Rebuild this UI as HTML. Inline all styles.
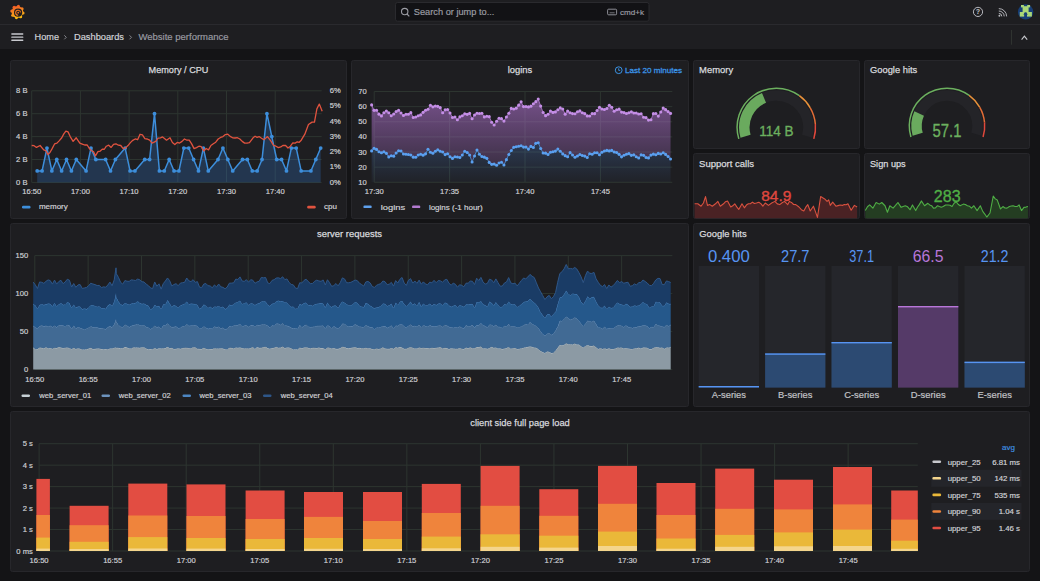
<!DOCTYPE html>
<html><head><meta charset="utf-8"><style>
html,body{margin:0;padding:0;background:#141416;width:1040px;height:581px;overflow:hidden}
svg{display:block;font-family:"Liberation Sans", sans-serif}
</style></head><body>
<svg width="1040" height="581" viewBox="0 0 1040 581">
<rect x="0" y="0" width="1040" height="49" fill="#1e1e21"/>
<rect x="0" y="24" width="1040" height="1" fill="#2a2a2e"/>
<rect x="10.5" y="60.5" width="336" height="158" rx="2" fill="#1e1e21" stroke="#27272b" stroke-width="1"/>
<rect x="351.5" y="60.5" width="337" height="158" rx="2" fill="#1e1e21" stroke="#27272b" stroke-width="1"/>
<rect x="693.5" y="60.5" width="166" height="88" rx="2" fill="#1e1e21" stroke="#27272b" stroke-width="1"/>
<rect x="864.5" y="60.5" width="165" height="88" rx="2" fill="#1e1e21" stroke="#27272b" stroke-width="1"/>
<rect x="693.5" y="153.5" width="166" height="65" rx="2" fill="#1e1e21" stroke="#27272b" stroke-width="1"/>
<rect x="864.5" y="153.5" width="165" height="65" rx="2" fill="#1e1e21" stroke="#27272b" stroke-width="1"/>
<rect x="10.5" y="223.5" width="678" height="183" rx="2" fill="#1e1e21" stroke="#27272b" stroke-width="1"/>
<rect x="693.5" y="223.5" width="336" height="183" rx="2" fill="#1e1e21" stroke="#27272b" stroke-width="1"/>
<rect x="10.5" y="411.5" width="1019" height="160" rx="2" fill="#1e1e21" stroke="#27272b" stroke-width="1"/>
<line x1="31.7" y1="90.8" x2="321.7" y2="90.8" stroke="#2d3530" stroke-width="1"/>
<text x="27.5" y="92.9" font-size="7.6" fill="#d0d1d5" text-anchor="end" font-weight="400" stroke="#d0d1d5" stroke-width="0.18">8 B</text>
<line x1="31.7" y1="113.7" x2="321.7" y2="113.7" stroke="#2d3530" stroke-width="1"/>
<text x="27.5" y="115.8" font-size="7.6" fill="#d0d1d5" text-anchor="end" font-weight="400" stroke="#d0d1d5" stroke-width="0.18">6 B</text>
<line x1="31.7" y1="136.6" x2="321.7" y2="136.6" stroke="#2d3530" stroke-width="1"/>
<text x="27.5" y="138.7" font-size="7.6" fill="#d0d1d5" text-anchor="end" font-weight="400" stroke="#d0d1d5" stroke-width="0.18">4 B</text>
<line x1="31.7" y1="159.5" x2="321.7" y2="159.5" stroke="#2d3530" stroke-width="1"/>
<text x="27.5" y="161.6" font-size="7.6" fill="#d0d1d5" text-anchor="end" font-weight="400" stroke="#d0d1d5" stroke-width="0.18">2 B</text>
<line x1="31.7" y1="182.4" x2="321.7" y2="182.4" stroke="#2d3530" stroke-width="1"/>
<text x="27.5" y="184.5" font-size="7.6" fill="#d0d1d5" text-anchor="end" font-weight="400" stroke="#d0d1d5" stroke-width="0.18">0 B</text>
<line x1="31.7" y1="90.8" x2="31.7" y2="182.4" stroke="#2d3530" stroke-width="1"/>
<text x="31.7" y="193.9" font-size="7.6" fill="#d0d1d5" text-anchor="middle" font-weight="400" stroke="#d0d1d5" stroke-width="0.18">16:50</text>
<line x1="80.4" y1="90.8" x2="80.4" y2="182.4" stroke="#2d3530" stroke-width="1"/>
<text x="80.4" y="193.9" font-size="7.6" fill="#d0d1d5" text-anchor="middle" font-weight="400" stroke="#d0d1d5" stroke-width="0.18">17:00</text>
<line x1="129.1" y1="90.8" x2="129.1" y2="182.4" stroke="#2d3530" stroke-width="1"/>
<text x="129.1" y="193.9" font-size="7.6" fill="#d0d1d5" text-anchor="middle" font-weight="400" stroke="#d0d1d5" stroke-width="0.18">17:10</text>
<line x1="177.8" y1="90.8" x2="177.8" y2="182.4" stroke="#2d3530" stroke-width="1"/>
<text x="177.8" y="193.9" font-size="7.6" fill="#d0d1d5" text-anchor="middle" font-weight="400" stroke="#d0d1d5" stroke-width="0.18">17:20</text>
<line x1="226.5" y1="90.8" x2="226.5" y2="182.4" stroke="#2d3530" stroke-width="1"/>
<text x="226.5" y="193.9" font-size="7.6" fill="#d0d1d5" text-anchor="middle" font-weight="400" stroke="#d0d1d5" stroke-width="0.18">17:30</text>
<line x1="275.2" y1="90.8" x2="275.2" y2="182.4" stroke="#2d3530" stroke-width="1"/>
<text x="275.2" y="193.9" font-size="7.6" fill="#d0d1d5" text-anchor="middle" font-weight="400" stroke="#d0d1d5" stroke-width="0.18">17:40</text>
<text x="329.8" y="93.1" font-size="7.6" fill="#d0d1d5" text-anchor="start" font-weight="400" stroke="#d0d1d5" stroke-width="0.18">6%</text>
<text x="329.8" y="108.37" font-size="7.6" fill="#d0d1d5" text-anchor="start" font-weight="400" stroke="#d0d1d5" stroke-width="0.18">5%</text>
<text x="329.8" y="123.63" font-size="7.6" fill="#d0d1d5" text-anchor="start" font-weight="400" stroke="#d0d1d5" stroke-width="0.18">4%</text>
<text x="329.8" y="138.9" font-size="7.6" fill="#d0d1d5" text-anchor="start" font-weight="400" stroke="#d0d1d5" stroke-width="0.18">3%</text>
<text x="329.8" y="154.17" font-size="7.6" fill="#d0d1d5" text-anchor="start" font-weight="400" stroke="#d0d1d5" stroke-width="0.18">2%</text>
<text x="329.8" y="169.43" font-size="7.6" fill="#d0d1d5" text-anchor="start" font-weight="400" stroke="#d0d1d5" stroke-width="0.18">1%</text>
<text x="329.8" y="184.7" font-size="7.6" fill="#d0d1d5" text-anchor="start" font-weight="400" stroke="#d0d1d5" stroke-width="0.18">0%</text>
<text x="178.5" y="72.5" font-size="9.2" fill="#d8d9dd" text-anchor="middle" font-weight="400" stroke="#d8d9dd" stroke-width="0.25" textLength="59.8" lengthAdjust="spacingAndGlyphs">Memory / CPU</text>
<path d="M37.19,170.95 L42.08,170.95 L46.96,148.05 L51.85,170.95 L56.74,159.5 L61.63,170.95 L66.52,159.5 L71.4,170.95 L76.29,159.5 L86.07,170.95 L90.96,148.05 L95.84,159.5 L105.62,159.5 L110.51,170.95 L115.4,159.5 L125.17,148.05 L130.06,170.95 L134.95,170.95 L144.72,159.5 L149.61,159.5 L154.5,113.7 L159.39,170.95 L164.28,170.95 L169.16,159.5 L174.05,170.95 L178.94,170.95 L183.83,148.05 L188.72,148.05 L193.6,159.5 L198.49,170.95 L203.38,148.05 L208.27,170.95 L218.04,159.5 L222.93,148.05 L227.82,159.5 L232.71,170.95 L242.48,159.5 L247.37,159.5 L252.26,170.95 L257.15,170.95 L262.04,159.5 L266.92,113.7 L271.81,136.6 L276.7,159.5 L281.59,159.5 L286.48,170.95 L291.36,148.05 L296.25,148.05 L301.14,170.95 L310.92,170.95 L315.8,159.5 L320.69,148.05 L320.69,182.4 L37.19,182.4 Z" fill="#2f6fb8" fill-opacity="0.31"/>
<path d="M37.19,170.95 L42.08,170.95 L46.96,148.05 L51.85,170.95 L56.74,159.5 L61.63,170.95 L66.52,159.5 L71.4,170.95 L76.29,159.5 L86.07,170.95 L90.96,148.05 L95.84,159.5 L105.62,159.5 L110.51,170.95 L115.4,159.5 L125.17,148.05 L130.06,170.95 L134.95,170.95 L144.72,159.5 L149.61,159.5 L154.5,113.7 L159.39,170.95 L164.28,170.95 L169.16,159.5 L174.05,170.95 L178.94,170.95 L183.83,148.05 L188.72,148.05 L193.6,159.5 L198.49,170.95 L203.38,148.05 L208.27,170.95 L218.04,159.5 L222.93,148.05 L227.82,159.5 L232.71,170.95 L242.48,159.5 L247.37,159.5 L252.26,170.95 L257.15,170.95 L262.04,159.5 L266.92,113.7 L271.81,136.6 L276.7,159.5 L281.59,159.5 L286.48,170.95 L291.36,148.05 L296.25,148.05 L301.14,170.95 L310.92,170.95 L315.8,159.5 L320.69,148.05" fill="none" stroke="#3d8edb" stroke-width="1.5" stroke-linejoin="round"/>
<circle cx="37.19" cy="170.95" r="1.9" fill="#3d8edb"/>
<circle cx="42.08" cy="170.95" r="1.9" fill="#3d8edb"/>
<circle cx="46.96" cy="148.05" r="1.9" fill="#3d8edb"/>
<circle cx="51.85" cy="170.95" r="1.9" fill="#3d8edb"/>
<circle cx="56.74" cy="159.5" r="1.9" fill="#3d8edb"/>
<circle cx="61.63" cy="170.95" r="1.9" fill="#3d8edb"/>
<circle cx="66.52" cy="159.5" r="1.9" fill="#3d8edb"/>
<circle cx="71.4" cy="170.95" r="1.9" fill="#3d8edb"/>
<circle cx="76.29" cy="159.5" r="1.9" fill="#3d8edb"/>
<circle cx="86.07" cy="170.95" r="1.9" fill="#3d8edb"/>
<circle cx="90.96" cy="148.05" r="1.9" fill="#3d8edb"/>
<circle cx="95.84" cy="159.5" r="1.9" fill="#3d8edb"/>
<circle cx="105.62" cy="159.5" r="1.9" fill="#3d8edb"/>
<circle cx="110.51" cy="170.95" r="1.9" fill="#3d8edb"/>
<circle cx="115.4" cy="159.5" r="1.9" fill="#3d8edb"/>
<circle cx="125.17" cy="148.05" r="1.9" fill="#3d8edb"/>
<circle cx="130.06" cy="170.95" r="1.9" fill="#3d8edb"/>
<circle cx="134.95" cy="170.95" r="1.9" fill="#3d8edb"/>
<circle cx="144.72" cy="159.5" r="1.9" fill="#3d8edb"/>
<circle cx="149.61" cy="159.5" r="1.9" fill="#3d8edb"/>
<circle cx="154.5" cy="113.7" r="1.9" fill="#3d8edb"/>
<circle cx="159.39" cy="170.95" r="1.9" fill="#3d8edb"/>
<circle cx="164.28" cy="170.95" r="1.9" fill="#3d8edb"/>
<circle cx="169.16" cy="159.5" r="1.9" fill="#3d8edb"/>
<circle cx="174.05" cy="170.95" r="1.9" fill="#3d8edb"/>
<circle cx="178.94" cy="170.95" r="1.9" fill="#3d8edb"/>
<circle cx="183.83" cy="148.05" r="1.9" fill="#3d8edb"/>
<circle cx="188.72" cy="148.05" r="1.9" fill="#3d8edb"/>
<circle cx="193.6" cy="159.5" r="1.9" fill="#3d8edb"/>
<circle cx="198.49" cy="170.95" r="1.9" fill="#3d8edb"/>
<circle cx="203.38" cy="148.05" r="1.9" fill="#3d8edb"/>
<circle cx="208.27" cy="170.95" r="1.9" fill="#3d8edb"/>
<circle cx="218.04" cy="159.5" r="1.9" fill="#3d8edb"/>
<circle cx="222.93" cy="148.05" r="1.9" fill="#3d8edb"/>
<circle cx="227.82" cy="159.5" r="1.9" fill="#3d8edb"/>
<circle cx="232.71" cy="170.95" r="1.9" fill="#3d8edb"/>
<circle cx="242.48" cy="159.5" r="1.9" fill="#3d8edb"/>
<circle cx="247.37" cy="159.5" r="1.9" fill="#3d8edb"/>
<circle cx="252.26" cy="170.95" r="1.9" fill="#3d8edb"/>
<circle cx="257.15" cy="170.95" r="1.9" fill="#3d8edb"/>
<circle cx="262.04" cy="159.5" r="1.9" fill="#3d8edb"/>
<circle cx="266.92" cy="113.7" r="1.9" fill="#3d8edb"/>
<circle cx="271.81" cy="136.6" r="1.9" fill="#3d8edb"/>
<circle cx="276.7" cy="159.5" r="1.9" fill="#3d8edb"/>
<circle cx="281.59" cy="159.5" r="1.9" fill="#3d8edb"/>
<circle cx="286.48" cy="170.95" r="1.9" fill="#3d8edb"/>
<circle cx="291.36" cy="148.05" r="1.9" fill="#3d8edb"/>
<circle cx="296.25" cy="148.05" r="1.9" fill="#3d8edb"/>
<circle cx="301.14" cy="170.95" r="1.9" fill="#3d8edb"/>
<circle cx="310.92" cy="170.95" r="1.9" fill="#3d8edb"/>
<circle cx="315.8" cy="159.5" r="1.9" fill="#3d8edb"/>
<circle cx="320.69" cy="148.05" r="1.9" fill="#3d8edb"/>
<path d="M31.67,145.49 L34.08,145.68 L36.49,147.42 L40.1,145.49 L43.71,149.83 L45.88,150.7 L48.04,154.64 L50.09,152.3 L52.14,148.63 L54.55,143.97 L56.95,143.09 L59.36,140.6 L61.77,137.79 L63.82,133.83 L65.86,131.05 L68.03,131.87 L70.2,136.59 L73.09,141.4 L76.22,137.79 L79.83,143.09 L82.24,144.08 L84.64,145.01 L87.05,144.78 L89.46,148.63 L91.47,150.74 L93.47,151.55 L95.48,155.85 L97.89,151.64 L100.3,151.03 L102.3,149.1 L104.31,149.26 L106.32,146.22 L108.72,145.16 L111.13,147.42 L113.54,144.4 L115.95,143.81 L118.36,145.21 L120.76,145.49 L123.17,148.67 L125.58,147.9 L127.99,145.59 L130.39,142.61 L132.8,140.34 L135.21,138.99 L137.62,139.72 L140.03,134.27 L142.43,134.9 L144.84,138.52 L147.25,138.99 L149.66,140.11 L152.07,143.09 L155.68,141.4 L158.09,138.03 L160.49,137.79 L162.5,136.91 L164.51,138.55 L166.51,140.2 L170,137.79 L172.41,142.55 L174.82,144.53 L177.22,142.4 L179.63,143.09 L182.04,141.4 L184.45,138.99 L186.86,140.21 L189.26,140.2 L191.67,143.85 L194.08,148.63 L196.49,147.63 L198.89,146.22 L201.3,146.7 L203.71,151.03 L206.12,148.49 L208.53,149.83 L210.93,145.53 L213.34,143.81 L215.75,142.2 L218.16,138.99 L220.57,137.47 L222.97,136.59 L225.38,134.56 L227.79,134.18 L230.2,136.36 L232.61,137.79 L235.01,137.98 L237.42,137.71 L239.83,138.99 L242.24,141.4 L244.64,143.1 L247.05,143.08 L249.46,142.61 L253.07,137.79 L255.08,136.26 L257.09,137.31 L259.09,136.59 L261.5,138.26 L263.91,139.72 L267.52,136.59 L271.13,141.4 L273.54,145.46 L275.95,146.22 L278.36,147.59 L280.76,146.94 L283.17,145.28 L285.58,145.49 L287.99,147.97 L290.39,146.22 L292.8,142.97 L295.21,143.09 L297.22,141.76 L299.22,142.29 L301.23,140.2 L304.84,134.18 L308.45,124.55 L312.07,122.14 L314.47,122.14 L316.88,108.89 L319.29,104.08 L322.18,111.3" fill="none" stroke="#e0533f" stroke-width="1.3" stroke-linejoin="round"/>
<rect x="22" y="205.8" width="8.5" height="2.6" rx="1.2" fill="#3d8edb"/>
<text x="38.9" y="209.3" font-size="8" fill="#d0d1d5" text-anchor="start" font-weight="400" stroke="#d0d1d5" stroke-width="0.18">memory</text>
<rect x="307.2" y="205.8" width="8.5" height="2.6" rx="1.2" fill="#e0533f"/>
<text x="324.1" y="209.3" font-size="8" fill="#d0d1d5" text-anchor="start" font-weight="400" stroke="#d0d1d5" stroke-width="0.18">cpu</text>
<line x1="374.2" y1="91.5" x2="672.3" y2="91.5" stroke="#2d3530" stroke-width="1"/>
<text x="366.8" y="94" font-size="7.6" fill="#d0d1d5" text-anchor="end" font-weight="400" stroke="#d0d1d5" stroke-width="0.18">70</text>
<line x1="374.2" y1="106.63" x2="672.3" y2="106.63" stroke="#2d3530" stroke-width="1"/>
<text x="366.8" y="109.13" font-size="7.6" fill="#d0d1d5" text-anchor="end" font-weight="400" stroke="#d0d1d5" stroke-width="0.18">60</text>
<line x1="374.2" y1="121.77" x2="672.3" y2="121.77" stroke="#2d3530" stroke-width="1"/>
<text x="366.8" y="124.27" font-size="7.6" fill="#d0d1d5" text-anchor="end" font-weight="400" stroke="#d0d1d5" stroke-width="0.18">50</text>
<line x1="374.2" y1="136.9" x2="672.3" y2="136.9" stroke="#2d3530" stroke-width="1"/>
<text x="366.8" y="139.4" font-size="7.6" fill="#d0d1d5" text-anchor="end" font-weight="400" stroke="#d0d1d5" stroke-width="0.18">40</text>
<line x1="374.2" y1="152.03" x2="672.3" y2="152.03" stroke="#2d3530" stroke-width="1"/>
<text x="366.8" y="154.53" font-size="7.6" fill="#d0d1d5" text-anchor="end" font-weight="400" stroke="#d0d1d5" stroke-width="0.18">30</text>
<line x1="374.2" y1="167.17" x2="672.3" y2="167.17" stroke="#2d3530" stroke-width="1"/>
<text x="366.8" y="169.67" font-size="7.6" fill="#d0d1d5" text-anchor="end" font-weight="400" stroke="#d0d1d5" stroke-width="0.18">20</text>
<line x1="374.2" y1="182.3" x2="672.3" y2="182.3" stroke="#2d3530" stroke-width="1"/>
<text x="366.8" y="184.8" font-size="7.6" fill="#d0d1d5" text-anchor="end" font-weight="400" stroke="#d0d1d5" stroke-width="0.18">10</text>
<line x1="374.2" y1="91.5" x2="374.2" y2="182.3" stroke="#2d3530" stroke-width="1"/>
<text x="374.2" y="194" font-size="7.6" fill="#d0d1d5" text-anchor="middle" font-weight="400" stroke="#d0d1d5" stroke-width="0.18">17:30</text>
<line x1="449.6" y1="91.5" x2="449.6" y2="182.3" stroke="#2d3530" stroke-width="1"/>
<text x="449.6" y="194" font-size="7.6" fill="#d0d1d5" text-anchor="middle" font-weight="400" stroke="#d0d1d5" stroke-width="0.18">17:35</text>
<line x1="525" y1="91.5" x2="525" y2="182.3" stroke="#2d3530" stroke-width="1"/>
<text x="525" y="194" font-size="7.6" fill="#d0d1d5" text-anchor="middle" font-weight="400" stroke="#d0d1d5" stroke-width="0.18">17:40</text>
<line x1="600.4" y1="91.5" x2="600.4" y2="182.3" stroke="#2d3530" stroke-width="1"/>
<text x="600.4" y="194" font-size="7.6" fill="#d0d1d5" text-anchor="middle" font-weight="400" stroke="#d0d1d5" stroke-width="0.18">17:45</text>
<text x="520" y="72.5" font-size="9.2" fill="#d8d9dd" text-anchor="middle" font-weight="400" stroke="#d8d9dd" stroke-width="0.25" textLength="24.5" lengthAdjust="spacingAndGlyphs">logins</text>
<defs><linearGradient id="gp" gradientUnits="userSpaceOnUse" x1="0" y1="91" x2="0" y2="181"><stop offset="0" stop-color="#b877d9" stop-opacity="0.6"/><stop offset="1" stop-color="#b877d9" stop-opacity="0.12"/></linearGradient>
<linearGradient id="gb" gradientUnits="userSpaceOnUse" x1="0" y1="91" x2="0" y2="181"><stop offset="0" stop-color="#5794f2" stop-opacity="0.5"/><stop offset="1" stop-color="#5794f2" stop-opacity="0.04"/></linearGradient></defs>
<path d="M371.64,104.92 L374.09,110.37 L376.54,110.24 L378.99,114.17 L381.44,115.89 L383.89,112.71 L386.34,110.95 L388.79,112.71 L391.24,115.79 L393.69,114 L396.14,111.5 L398.59,110.32 L401.04,112.98 L403.49,115.56 L405.94,114.32 L408.39,114.3 L410.84,112.67 L413.29,117.55 L415.74,116.93 L418.19,115.79 L420.64,114.9 L423.09,112.33 L425.54,110.26 L427.99,109.32 L430.44,105.23 L432.89,106.85 L435.34,105.98 L437.79,106.33 L440.24,107.66 L442.69,112.8 L445.14,109.86 L447.59,109.44 L450.04,112.93 L452.49,117.49 L454.94,116.93 L457.39,119.8 L459.84,116.92 L462.29,115.71 L464.74,113.84 L467.19,114.34 L469.64,113.4 L472.09,118.82 L474.54,114.99 L476.99,113.32 L479.44,113.57 L481.89,113.21 L484.34,116.9 L486.79,116.26 L489.24,116.65 L491.69,122.19 L494.14,125.01 L496.59,121.32 L499.04,118.18 L501.49,118.67 L503.94,121.08 L506.39,116.93 L508.84,113.21 L511.29,108.41 L513.74,109.05 L516.19,108.13 L518.64,105.13 L521.09,101.71 L523.54,106.58 L525.99,106.52 L528.44,106.88 L530.89,106.17 L533.34,103.81 L535.79,101.67 L538.24,99.11 L540.69,106.08 L543.14,112.48 L545.59,115.63 L548.04,114.25 L550.49,111.11 L552.94,112.39 L555.39,111.91 L557.84,109.79 L560.29,107.91 L562.74,109.06 L565.19,114.14 L567.64,111.1 L570.09,112.77 L572.54,113.62 L574.99,113.68 L577.44,111.81 L579.89,110.88 L582.34,112.78 L584.79,113.65 L587.24,115.92 L589.69,115.98 L592.14,113.59 L594.59,113.66 L597.04,110.43 L599.49,107.23 L601.94,108.98 L604.39,109.57 L606.84,108.45 L609.29,105.31 L611.74,107.23 L614.19,111.3 L616.64,109.77 L619.09,109.14 L621.54,112.12 L623.99,112.61 L626.44,113.44 L628.89,112.7 L631.34,111.83 L633.79,113.03 L636.24,112.95 L638.69,113.96 L641.14,113.81 L643.59,117.32 L646.04,117.64 L648.49,120.09 L650.94,119.75 L653.39,113.63 L655.84,113.43 L658.29,116.11 L660.74,111.93 L663.19,108.08 L665.64,109.64 L668.09,111.59 L670.54,113.41 L670.54,158.95 L668.09,156.48 L665.64,154.4 L663.19,152.74 L660.74,153.99 L658.29,153.42 L655.84,154.82 L653.39,154.16 L650.94,155.08 L648.49,157.92 L646.04,157.45 L643.59,155.36 L641.14,154.83 L638.69,158.04 L636.24,156.74 L633.79,154.84 L631.34,155.34 L628.89,153.58 L626.44,154.29 L623.99,155.2 L621.54,156.86 L619.09,154.34 L616.64,152.48 L614.19,151.97 L611.74,150.4 L609.29,150.88 L606.84,150.39 L604.39,150.95 L601.94,152.32 L599.49,154.7 L597.04,152.82 L594.59,152.71 L592.14,154.32 L589.69,153.82 L587.24,157.45 L584.79,156.09 L582.34,155.46 L579.89,154.56 L577.44,156.05 L574.99,157.22 L572.54,155.04 L570.09,152.67 L567.64,156.74 L565.19,155.65 L562.74,153.88 L560.29,151.21 L557.84,149.08 L555.39,151.1 L552.94,151.75 L550.49,152.25 L548.04,154.44 L545.59,153.16 L543.14,153 L540.69,148.51 L538.24,142.68 L535.79,143.33 L533.34,147.53 L530.89,146.38 L528.44,149.1 L525.99,147.1 L523.54,147.1 L521.09,145.74 L518.64,146.28 L516.19,146.77 L513.74,147.33 L511.29,150.48 L508.84,154.48 L506.39,159.66 L503.94,165.05 L501.49,162.2 L499.04,163.07 L496.59,165.3 L494.14,164.12 L491.69,164.35 L489.24,162.39 L486.79,158.37 L484.34,157.17 L481.89,156.56 L479.44,154.21 L476.99,149.99 L474.54,155.96 L472.09,161.98 L469.64,154.95 L467.19,152.49 L464.74,151.28 L462.29,155.02 L459.84,157.5 L457.39,157.06 L454.94,156.81 L452.49,158.39 L450.04,156.77 L447.59,153.77 L445.14,154.58 L442.69,151.93 L440.24,151.26 L437.79,149.68 L435.34,151.24 L432.89,153.32 L430.44,152.24 L427.99,149.31 L425.54,153.87 L423.09,155.15 L420.64,154.24 L418.19,155.07 L415.74,157.26 L413.29,157.16 L410.84,155.07 L408.39,154.57 L405.94,154.32 L403.49,153.93 L401.04,150.99 L398.59,150.82 L396.14,153.05 L393.69,156.13 L391.24,155.79 L388.79,156.91 L386.34,153.33 L383.89,151.68 L381.44,152.75 L378.99,151.79 L376.54,149.42 L374.09,148.33 L371.64,150.9 Z" fill="url(#gp)"/>
<path d="M371.64,150.9 L374.09,148.33 L376.54,149.42 L378.99,151.79 L381.44,152.75 L383.89,151.68 L386.34,153.33 L388.79,156.91 L391.24,155.79 L393.69,156.13 L396.14,153.05 L398.59,150.82 L401.04,150.99 L403.49,153.93 L405.94,154.32 L408.39,154.57 L410.84,155.07 L413.29,157.16 L415.74,157.26 L418.19,155.07 L420.64,154.24 L423.09,155.15 L425.54,153.87 L427.99,149.31 L430.44,152.24 L432.89,153.32 L435.34,151.24 L437.79,149.68 L440.24,151.26 L442.69,151.93 L445.14,154.58 L447.59,153.77 L450.04,156.77 L452.49,158.39 L454.94,156.81 L457.39,157.06 L459.84,157.5 L462.29,155.02 L464.74,151.28 L467.19,152.49 L469.64,154.95 L472.09,161.98 L474.54,155.96 L476.99,149.99 L479.44,154.21 L481.89,156.56 L484.34,157.17 L486.79,158.37 L489.24,162.39 L491.69,164.35 L494.14,164.12 L496.59,165.3 L499.04,163.07 L501.49,162.2 L503.94,165.05 L506.39,159.66 L508.84,154.48 L511.29,150.48 L513.74,147.33 L516.19,146.77 L518.64,146.28 L521.09,145.74 L523.54,147.1 L525.99,147.1 L528.44,149.1 L530.89,146.38 L533.34,147.53 L535.79,143.33 L538.24,142.68 L540.69,148.51 L543.14,153 L545.59,153.16 L548.04,154.44 L550.49,152.25 L552.94,151.75 L555.39,151.1 L557.84,149.08 L560.29,151.21 L562.74,153.88 L565.19,155.65 L567.64,156.74 L570.09,152.67 L572.54,155.04 L574.99,157.22 L577.44,156.05 L579.89,154.56 L582.34,155.46 L584.79,156.09 L587.24,157.45 L589.69,153.82 L592.14,154.32 L594.59,152.71 L597.04,152.82 L599.49,154.7 L601.94,152.32 L604.39,150.95 L606.84,150.39 L609.29,150.88 L611.74,150.4 L614.19,151.97 L616.64,152.48 L619.09,154.34 L621.54,156.86 L623.99,155.2 L626.44,154.29 L628.89,153.58 L631.34,155.34 L633.79,154.84 L636.24,156.74 L638.69,158.04 L641.14,154.83 L643.59,155.36 L646.04,157.45 L648.49,157.92 L650.94,155.08 L653.39,154.16 L655.84,154.82 L658.29,153.42 L660.74,153.99 L663.19,152.74 L665.64,154.4 L668.09,156.48 L670.54,158.95 L670.54,182.3 L371.64,182.3 Z" fill="url(#gb)"/>
<path d="M371.64,104.92 L374.09,110.37 L376.54,110.24 L378.99,114.17 L381.44,115.89 L383.89,112.71 L386.34,110.95 L388.79,112.71 L391.24,115.79 L393.69,114 L396.14,111.5 L398.59,110.32 L401.04,112.98 L403.49,115.56 L405.94,114.32 L408.39,114.3 L410.84,112.67 L413.29,117.55 L415.74,116.93 L418.19,115.79 L420.64,114.9 L423.09,112.33 L425.54,110.26 L427.99,109.32 L430.44,105.23 L432.89,106.85 L435.34,105.98 L437.79,106.33 L440.24,107.66 L442.69,112.8 L445.14,109.86 L447.59,109.44 L450.04,112.93 L452.49,117.49 L454.94,116.93 L457.39,119.8 L459.84,116.92 L462.29,115.71 L464.74,113.84 L467.19,114.34 L469.64,113.4 L472.09,118.82 L474.54,114.99 L476.99,113.32 L479.44,113.57 L481.89,113.21 L484.34,116.9 L486.79,116.26 L489.24,116.65 L491.69,122.19 L494.14,125.01 L496.59,121.32 L499.04,118.18 L501.49,118.67 L503.94,121.08 L506.39,116.93 L508.84,113.21 L511.29,108.41 L513.74,109.05 L516.19,108.13 L518.64,105.13 L521.09,101.71 L523.54,106.58 L525.99,106.52 L528.44,106.88 L530.89,106.17 L533.34,103.81 L535.79,101.67 L538.24,99.11 L540.69,106.08 L543.14,112.48 L545.59,115.63 L548.04,114.25 L550.49,111.11 L552.94,112.39 L555.39,111.91 L557.84,109.79 L560.29,107.91 L562.74,109.06 L565.19,114.14 L567.64,111.1 L570.09,112.77 L572.54,113.62 L574.99,113.68 L577.44,111.81 L579.89,110.88 L582.34,112.78 L584.79,113.65 L587.24,115.92 L589.69,115.98 L592.14,113.59 L594.59,113.66 L597.04,110.43 L599.49,107.23 L601.94,108.98 L604.39,109.57 L606.84,108.45 L609.29,105.31 L611.74,107.23 L614.19,111.3 L616.64,109.77 L619.09,109.14 L621.54,112.12 L623.99,112.61 L626.44,113.44 L628.89,112.7 L631.34,111.83 L633.79,113.03 L636.24,112.95 L638.69,113.96 L641.14,113.81 L643.59,117.32 L646.04,117.64 L648.49,120.09 L650.94,119.75 L653.39,113.63 L655.84,113.43 L658.29,116.11 L660.74,111.93 L663.19,108.08 L665.64,109.64 L668.09,111.59 L670.54,113.41" fill="none" stroke="#b27ad0" stroke-width="0.8"/>
<path d="M371.64,150.9 L374.09,148.33 L376.54,149.42 L378.99,151.79 L381.44,152.75 L383.89,151.68 L386.34,153.33 L388.79,156.91 L391.24,155.79 L393.69,156.13 L396.14,153.05 L398.59,150.82 L401.04,150.99 L403.49,153.93 L405.94,154.32 L408.39,154.57 L410.84,155.07 L413.29,157.16 L415.74,157.26 L418.19,155.07 L420.64,154.24 L423.09,155.15 L425.54,153.87 L427.99,149.31 L430.44,152.24 L432.89,153.32 L435.34,151.24 L437.79,149.68 L440.24,151.26 L442.69,151.93 L445.14,154.58 L447.59,153.77 L450.04,156.77 L452.49,158.39 L454.94,156.81 L457.39,157.06 L459.84,157.5 L462.29,155.02 L464.74,151.28 L467.19,152.49 L469.64,154.95 L472.09,161.98 L474.54,155.96 L476.99,149.99 L479.44,154.21 L481.89,156.56 L484.34,157.17 L486.79,158.37 L489.24,162.39 L491.69,164.35 L494.14,164.12 L496.59,165.3 L499.04,163.07 L501.49,162.2 L503.94,165.05 L506.39,159.66 L508.84,154.48 L511.29,150.48 L513.74,147.33 L516.19,146.77 L518.64,146.28 L521.09,145.74 L523.54,147.1 L525.99,147.1 L528.44,149.1 L530.89,146.38 L533.34,147.53 L535.79,143.33 L538.24,142.68 L540.69,148.51 L543.14,153 L545.59,153.16 L548.04,154.44 L550.49,152.25 L552.94,151.75 L555.39,151.1 L557.84,149.08 L560.29,151.21 L562.74,153.88 L565.19,155.65 L567.64,156.74 L570.09,152.67 L572.54,155.04 L574.99,157.22 L577.44,156.05 L579.89,154.56 L582.34,155.46 L584.79,156.09 L587.24,157.45 L589.69,153.82 L592.14,154.32 L594.59,152.71 L597.04,152.82 L599.49,154.7 L601.94,152.32 L604.39,150.95 L606.84,150.39 L609.29,150.88 L611.74,150.4 L614.19,151.97 L616.64,152.48 L619.09,154.34 L621.54,156.86 L623.99,155.2 L626.44,154.29 L628.89,153.58 L631.34,155.34 L633.79,154.84 L636.24,156.74 L638.69,158.04 L641.14,154.83 L643.59,155.36 L646.04,157.45 L648.49,157.92 L650.94,155.08 L653.39,154.16 L655.84,154.82 L658.29,153.42 L660.74,153.99 L663.19,152.74 L665.64,154.4 L668.09,156.48 L670.54,158.95" fill="none" stroke="#4f94e0" stroke-width="0.8"/>
<circle cx="371.64" cy="104.92" r="1.55" fill="#c48ee6"/>
<circle cx="374.09" cy="110.37" r="1.55" fill="#c48ee6"/>
<circle cx="376.54" cy="110.24" r="1.55" fill="#c48ee6"/>
<circle cx="378.99" cy="114.17" r="1.55" fill="#c48ee6"/>
<circle cx="381.44" cy="115.89" r="1.55" fill="#c48ee6"/>
<circle cx="383.89" cy="112.71" r="1.55" fill="#c48ee6"/>
<circle cx="386.34" cy="110.95" r="1.55" fill="#c48ee6"/>
<circle cx="388.79" cy="112.71" r="1.55" fill="#c48ee6"/>
<circle cx="391.24" cy="115.79" r="1.55" fill="#c48ee6"/>
<circle cx="393.69" cy="114" r="1.55" fill="#c48ee6"/>
<circle cx="396.14" cy="111.5" r="1.55" fill="#c48ee6"/>
<circle cx="398.59" cy="110.32" r="1.55" fill="#c48ee6"/>
<circle cx="401.04" cy="112.98" r="1.55" fill="#c48ee6"/>
<circle cx="403.49" cy="115.56" r="1.55" fill="#c48ee6"/>
<circle cx="405.94" cy="114.32" r="1.55" fill="#c48ee6"/>
<circle cx="408.39" cy="114.3" r="1.55" fill="#c48ee6"/>
<circle cx="410.84" cy="112.67" r="1.55" fill="#c48ee6"/>
<circle cx="413.29" cy="117.55" r="1.55" fill="#c48ee6"/>
<circle cx="415.74" cy="116.93" r="1.55" fill="#c48ee6"/>
<circle cx="418.19" cy="115.79" r="1.55" fill="#c48ee6"/>
<circle cx="420.64" cy="114.9" r="1.55" fill="#c48ee6"/>
<circle cx="423.09" cy="112.33" r="1.55" fill="#c48ee6"/>
<circle cx="425.54" cy="110.26" r="1.55" fill="#c48ee6"/>
<circle cx="427.99" cy="109.32" r="1.55" fill="#c48ee6"/>
<circle cx="430.44" cy="105.23" r="1.55" fill="#c48ee6"/>
<circle cx="432.89" cy="106.85" r="1.55" fill="#c48ee6"/>
<circle cx="435.34" cy="105.98" r="1.55" fill="#c48ee6"/>
<circle cx="437.79" cy="106.33" r="1.55" fill="#c48ee6"/>
<circle cx="440.24" cy="107.66" r="1.55" fill="#c48ee6"/>
<circle cx="442.69" cy="112.8" r="1.55" fill="#c48ee6"/>
<circle cx="445.14" cy="109.86" r="1.55" fill="#c48ee6"/>
<circle cx="447.59" cy="109.44" r="1.55" fill="#c48ee6"/>
<circle cx="450.04" cy="112.93" r="1.55" fill="#c48ee6"/>
<circle cx="452.49" cy="117.49" r="1.55" fill="#c48ee6"/>
<circle cx="454.94" cy="116.93" r="1.55" fill="#c48ee6"/>
<circle cx="457.39" cy="119.8" r="1.55" fill="#c48ee6"/>
<circle cx="459.84" cy="116.92" r="1.55" fill="#c48ee6"/>
<circle cx="462.29" cy="115.71" r="1.55" fill="#c48ee6"/>
<circle cx="464.74" cy="113.84" r="1.55" fill="#c48ee6"/>
<circle cx="467.19" cy="114.34" r="1.55" fill="#c48ee6"/>
<circle cx="469.64" cy="113.4" r="1.55" fill="#c48ee6"/>
<circle cx="472.09" cy="118.82" r="1.55" fill="#c48ee6"/>
<circle cx="474.54" cy="114.99" r="1.55" fill="#c48ee6"/>
<circle cx="476.99" cy="113.32" r="1.55" fill="#c48ee6"/>
<circle cx="479.44" cy="113.57" r="1.55" fill="#c48ee6"/>
<circle cx="481.89" cy="113.21" r="1.55" fill="#c48ee6"/>
<circle cx="484.34" cy="116.9" r="1.55" fill="#c48ee6"/>
<circle cx="486.79" cy="116.26" r="1.55" fill="#c48ee6"/>
<circle cx="489.24" cy="116.65" r="1.55" fill="#c48ee6"/>
<circle cx="491.69" cy="122.19" r="1.55" fill="#c48ee6"/>
<circle cx="494.14" cy="125.01" r="1.55" fill="#c48ee6"/>
<circle cx="496.59" cy="121.32" r="1.55" fill="#c48ee6"/>
<circle cx="499.04" cy="118.18" r="1.55" fill="#c48ee6"/>
<circle cx="501.49" cy="118.67" r="1.55" fill="#c48ee6"/>
<circle cx="503.94" cy="121.08" r="1.55" fill="#c48ee6"/>
<circle cx="506.39" cy="116.93" r="1.55" fill="#c48ee6"/>
<circle cx="508.84" cy="113.21" r="1.55" fill="#c48ee6"/>
<circle cx="511.29" cy="108.41" r="1.55" fill="#c48ee6"/>
<circle cx="513.74" cy="109.05" r="1.55" fill="#c48ee6"/>
<circle cx="516.19" cy="108.13" r="1.55" fill="#c48ee6"/>
<circle cx="518.64" cy="105.13" r="1.55" fill="#c48ee6"/>
<circle cx="521.09" cy="101.71" r="1.55" fill="#c48ee6"/>
<circle cx="523.54" cy="106.58" r="1.55" fill="#c48ee6"/>
<circle cx="525.99" cy="106.52" r="1.55" fill="#c48ee6"/>
<circle cx="528.44" cy="106.88" r="1.55" fill="#c48ee6"/>
<circle cx="530.89" cy="106.17" r="1.55" fill="#c48ee6"/>
<circle cx="533.34" cy="103.81" r="1.55" fill="#c48ee6"/>
<circle cx="535.79" cy="101.67" r="1.55" fill="#c48ee6"/>
<circle cx="538.24" cy="99.11" r="1.55" fill="#c48ee6"/>
<circle cx="540.69" cy="106.08" r="1.55" fill="#c48ee6"/>
<circle cx="543.14" cy="112.48" r="1.55" fill="#c48ee6"/>
<circle cx="545.59" cy="115.63" r="1.55" fill="#c48ee6"/>
<circle cx="548.04" cy="114.25" r="1.55" fill="#c48ee6"/>
<circle cx="550.49" cy="111.11" r="1.55" fill="#c48ee6"/>
<circle cx="552.94" cy="112.39" r="1.55" fill="#c48ee6"/>
<circle cx="555.39" cy="111.91" r="1.55" fill="#c48ee6"/>
<circle cx="557.84" cy="109.79" r="1.55" fill="#c48ee6"/>
<circle cx="560.29" cy="107.91" r="1.55" fill="#c48ee6"/>
<circle cx="562.74" cy="109.06" r="1.55" fill="#c48ee6"/>
<circle cx="565.19" cy="114.14" r="1.55" fill="#c48ee6"/>
<circle cx="567.64" cy="111.1" r="1.55" fill="#c48ee6"/>
<circle cx="570.09" cy="112.77" r="1.55" fill="#c48ee6"/>
<circle cx="572.54" cy="113.62" r="1.55" fill="#c48ee6"/>
<circle cx="574.99" cy="113.68" r="1.55" fill="#c48ee6"/>
<circle cx="577.44" cy="111.81" r="1.55" fill="#c48ee6"/>
<circle cx="579.89" cy="110.88" r="1.55" fill="#c48ee6"/>
<circle cx="582.34" cy="112.78" r="1.55" fill="#c48ee6"/>
<circle cx="584.79" cy="113.65" r="1.55" fill="#c48ee6"/>
<circle cx="587.24" cy="115.92" r="1.55" fill="#c48ee6"/>
<circle cx="589.69" cy="115.98" r="1.55" fill="#c48ee6"/>
<circle cx="592.14" cy="113.59" r="1.55" fill="#c48ee6"/>
<circle cx="594.59" cy="113.66" r="1.55" fill="#c48ee6"/>
<circle cx="597.04" cy="110.43" r="1.55" fill="#c48ee6"/>
<circle cx="599.49" cy="107.23" r="1.55" fill="#c48ee6"/>
<circle cx="601.94" cy="108.98" r="1.55" fill="#c48ee6"/>
<circle cx="604.39" cy="109.57" r="1.55" fill="#c48ee6"/>
<circle cx="606.84" cy="108.45" r="1.55" fill="#c48ee6"/>
<circle cx="609.29" cy="105.31" r="1.55" fill="#c48ee6"/>
<circle cx="611.74" cy="107.23" r="1.55" fill="#c48ee6"/>
<circle cx="614.19" cy="111.3" r="1.55" fill="#c48ee6"/>
<circle cx="616.64" cy="109.77" r="1.55" fill="#c48ee6"/>
<circle cx="619.09" cy="109.14" r="1.55" fill="#c48ee6"/>
<circle cx="621.54" cy="112.12" r="1.55" fill="#c48ee6"/>
<circle cx="623.99" cy="112.61" r="1.55" fill="#c48ee6"/>
<circle cx="626.44" cy="113.44" r="1.55" fill="#c48ee6"/>
<circle cx="628.89" cy="112.7" r="1.55" fill="#c48ee6"/>
<circle cx="631.34" cy="111.83" r="1.55" fill="#c48ee6"/>
<circle cx="633.79" cy="113.03" r="1.55" fill="#c48ee6"/>
<circle cx="636.24" cy="112.95" r="1.55" fill="#c48ee6"/>
<circle cx="638.69" cy="113.96" r="1.55" fill="#c48ee6"/>
<circle cx="641.14" cy="113.81" r="1.55" fill="#c48ee6"/>
<circle cx="643.59" cy="117.32" r="1.55" fill="#c48ee6"/>
<circle cx="646.04" cy="117.64" r="1.55" fill="#c48ee6"/>
<circle cx="648.49" cy="120.09" r="1.55" fill="#c48ee6"/>
<circle cx="650.94" cy="119.75" r="1.55" fill="#c48ee6"/>
<circle cx="653.39" cy="113.63" r="1.55" fill="#c48ee6"/>
<circle cx="655.84" cy="113.43" r="1.55" fill="#c48ee6"/>
<circle cx="658.29" cy="116.11" r="1.55" fill="#c48ee6"/>
<circle cx="660.74" cy="111.93" r="1.55" fill="#c48ee6"/>
<circle cx="663.19" cy="108.08" r="1.55" fill="#c48ee6"/>
<circle cx="665.64" cy="109.64" r="1.55" fill="#c48ee6"/>
<circle cx="668.09" cy="111.59" r="1.55" fill="#c48ee6"/>
<circle cx="670.54" cy="113.41" r="1.55" fill="#c48ee6"/>
<circle cx="371.64" cy="150.9" r="1.55" fill="#5aa0f0"/>
<circle cx="374.09" cy="148.33" r="1.55" fill="#5aa0f0"/>
<circle cx="376.54" cy="149.42" r="1.55" fill="#5aa0f0"/>
<circle cx="378.99" cy="151.79" r="1.55" fill="#5aa0f0"/>
<circle cx="381.44" cy="152.75" r="1.55" fill="#5aa0f0"/>
<circle cx="383.89" cy="151.68" r="1.55" fill="#5aa0f0"/>
<circle cx="386.34" cy="153.33" r="1.55" fill="#5aa0f0"/>
<circle cx="388.79" cy="156.91" r="1.55" fill="#5aa0f0"/>
<circle cx="391.24" cy="155.79" r="1.55" fill="#5aa0f0"/>
<circle cx="393.69" cy="156.13" r="1.55" fill="#5aa0f0"/>
<circle cx="396.14" cy="153.05" r="1.55" fill="#5aa0f0"/>
<circle cx="398.59" cy="150.82" r="1.55" fill="#5aa0f0"/>
<circle cx="401.04" cy="150.99" r="1.55" fill="#5aa0f0"/>
<circle cx="403.49" cy="153.93" r="1.55" fill="#5aa0f0"/>
<circle cx="405.94" cy="154.32" r="1.55" fill="#5aa0f0"/>
<circle cx="408.39" cy="154.57" r="1.55" fill="#5aa0f0"/>
<circle cx="410.84" cy="155.07" r="1.55" fill="#5aa0f0"/>
<circle cx="413.29" cy="157.16" r="1.55" fill="#5aa0f0"/>
<circle cx="415.74" cy="157.26" r="1.55" fill="#5aa0f0"/>
<circle cx="418.19" cy="155.07" r="1.55" fill="#5aa0f0"/>
<circle cx="420.64" cy="154.24" r="1.55" fill="#5aa0f0"/>
<circle cx="423.09" cy="155.15" r="1.55" fill="#5aa0f0"/>
<circle cx="425.54" cy="153.87" r="1.55" fill="#5aa0f0"/>
<circle cx="427.99" cy="149.31" r="1.55" fill="#5aa0f0"/>
<circle cx="430.44" cy="152.24" r="1.55" fill="#5aa0f0"/>
<circle cx="432.89" cy="153.32" r="1.55" fill="#5aa0f0"/>
<circle cx="435.34" cy="151.24" r="1.55" fill="#5aa0f0"/>
<circle cx="437.79" cy="149.68" r="1.55" fill="#5aa0f0"/>
<circle cx="440.24" cy="151.26" r="1.55" fill="#5aa0f0"/>
<circle cx="442.69" cy="151.93" r="1.55" fill="#5aa0f0"/>
<circle cx="445.14" cy="154.58" r="1.55" fill="#5aa0f0"/>
<circle cx="447.59" cy="153.77" r="1.55" fill="#5aa0f0"/>
<circle cx="450.04" cy="156.77" r="1.55" fill="#5aa0f0"/>
<circle cx="452.49" cy="158.39" r="1.55" fill="#5aa0f0"/>
<circle cx="454.94" cy="156.81" r="1.55" fill="#5aa0f0"/>
<circle cx="457.39" cy="157.06" r="1.55" fill="#5aa0f0"/>
<circle cx="459.84" cy="157.5" r="1.55" fill="#5aa0f0"/>
<circle cx="462.29" cy="155.02" r="1.55" fill="#5aa0f0"/>
<circle cx="464.74" cy="151.28" r="1.55" fill="#5aa0f0"/>
<circle cx="467.19" cy="152.49" r="1.55" fill="#5aa0f0"/>
<circle cx="469.64" cy="154.95" r="1.55" fill="#5aa0f0"/>
<circle cx="472.09" cy="161.98" r="1.55" fill="#5aa0f0"/>
<circle cx="474.54" cy="155.96" r="1.55" fill="#5aa0f0"/>
<circle cx="476.99" cy="149.99" r="1.55" fill="#5aa0f0"/>
<circle cx="479.44" cy="154.21" r="1.55" fill="#5aa0f0"/>
<circle cx="481.89" cy="156.56" r="1.55" fill="#5aa0f0"/>
<circle cx="484.34" cy="157.17" r="1.55" fill="#5aa0f0"/>
<circle cx="486.79" cy="158.37" r="1.55" fill="#5aa0f0"/>
<circle cx="489.24" cy="162.39" r="1.55" fill="#5aa0f0"/>
<circle cx="491.69" cy="164.35" r="1.55" fill="#5aa0f0"/>
<circle cx="494.14" cy="164.12" r="1.55" fill="#5aa0f0"/>
<circle cx="496.59" cy="165.3" r="1.55" fill="#5aa0f0"/>
<circle cx="499.04" cy="163.07" r="1.55" fill="#5aa0f0"/>
<circle cx="501.49" cy="162.2" r="1.55" fill="#5aa0f0"/>
<circle cx="503.94" cy="165.05" r="1.55" fill="#5aa0f0"/>
<circle cx="506.39" cy="159.66" r="1.55" fill="#5aa0f0"/>
<circle cx="508.84" cy="154.48" r="1.55" fill="#5aa0f0"/>
<circle cx="511.29" cy="150.48" r="1.55" fill="#5aa0f0"/>
<circle cx="513.74" cy="147.33" r="1.55" fill="#5aa0f0"/>
<circle cx="516.19" cy="146.77" r="1.55" fill="#5aa0f0"/>
<circle cx="518.64" cy="146.28" r="1.55" fill="#5aa0f0"/>
<circle cx="521.09" cy="145.74" r="1.55" fill="#5aa0f0"/>
<circle cx="523.54" cy="147.1" r="1.55" fill="#5aa0f0"/>
<circle cx="525.99" cy="147.1" r="1.55" fill="#5aa0f0"/>
<circle cx="528.44" cy="149.1" r="1.55" fill="#5aa0f0"/>
<circle cx="530.89" cy="146.38" r="1.55" fill="#5aa0f0"/>
<circle cx="533.34" cy="147.53" r="1.55" fill="#5aa0f0"/>
<circle cx="535.79" cy="143.33" r="1.55" fill="#5aa0f0"/>
<circle cx="538.24" cy="142.68" r="1.55" fill="#5aa0f0"/>
<circle cx="540.69" cy="148.51" r="1.55" fill="#5aa0f0"/>
<circle cx="543.14" cy="153" r="1.55" fill="#5aa0f0"/>
<circle cx="545.59" cy="153.16" r="1.55" fill="#5aa0f0"/>
<circle cx="548.04" cy="154.44" r="1.55" fill="#5aa0f0"/>
<circle cx="550.49" cy="152.25" r="1.55" fill="#5aa0f0"/>
<circle cx="552.94" cy="151.75" r="1.55" fill="#5aa0f0"/>
<circle cx="555.39" cy="151.1" r="1.55" fill="#5aa0f0"/>
<circle cx="557.84" cy="149.08" r="1.55" fill="#5aa0f0"/>
<circle cx="560.29" cy="151.21" r="1.55" fill="#5aa0f0"/>
<circle cx="562.74" cy="153.88" r="1.55" fill="#5aa0f0"/>
<circle cx="565.19" cy="155.65" r="1.55" fill="#5aa0f0"/>
<circle cx="567.64" cy="156.74" r="1.55" fill="#5aa0f0"/>
<circle cx="570.09" cy="152.67" r="1.55" fill="#5aa0f0"/>
<circle cx="572.54" cy="155.04" r="1.55" fill="#5aa0f0"/>
<circle cx="574.99" cy="157.22" r="1.55" fill="#5aa0f0"/>
<circle cx="577.44" cy="156.05" r="1.55" fill="#5aa0f0"/>
<circle cx="579.89" cy="154.56" r="1.55" fill="#5aa0f0"/>
<circle cx="582.34" cy="155.46" r="1.55" fill="#5aa0f0"/>
<circle cx="584.79" cy="156.09" r="1.55" fill="#5aa0f0"/>
<circle cx="587.24" cy="157.45" r="1.55" fill="#5aa0f0"/>
<circle cx="589.69" cy="153.82" r="1.55" fill="#5aa0f0"/>
<circle cx="592.14" cy="154.32" r="1.55" fill="#5aa0f0"/>
<circle cx="594.59" cy="152.71" r="1.55" fill="#5aa0f0"/>
<circle cx="597.04" cy="152.82" r="1.55" fill="#5aa0f0"/>
<circle cx="599.49" cy="154.7" r="1.55" fill="#5aa0f0"/>
<circle cx="601.94" cy="152.32" r="1.55" fill="#5aa0f0"/>
<circle cx="604.39" cy="150.95" r="1.55" fill="#5aa0f0"/>
<circle cx="606.84" cy="150.39" r="1.55" fill="#5aa0f0"/>
<circle cx="609.29" cy="150.88" r="1.55" fill="#5aa0f0"/>
<circle cx="611.74" cy="150.4" r="1.55" fill="#5aa0f0"/>
<circle cx="614.19" cy="151.97" r="1.55" fill="#5aa0f0"/>
<circle cx="616.64" cy="152.48" r="1.55" fill="#5aa0f0"/>
<circle cx="619.09" cy="154.34" r="1.55" fill="#5aa0f0"/>
<circle cx="621.54" cy="156.86" r="1.55" fill="#5aa0f0"/>
<circle cx="623.99" cy="155.2" r="1.55" fill="#5aa0f0"/>
<circle cx="626.44" cy="154.29" r="1.55" fill="#5aa0f0"/>
<circle cx="628.89" cy="153.58" r="1.55" fill="#5aa0f0"/>
<circle cx="631.34" cy="155.34" r="1.55" fill="#5aa0f0"/>
<circle cx="633.79" cy="154.84" r="1.55" fill="#5aa0f0"/>
<circle cx="636.24" cy="156.74" r="1.55" fill="#5aa0f0"/>
<circle cx="638.69" cy="158.04" r="1.55" fill="#5aa0f0"/>
<circle cx="641.14" cy="154.83" r="1.55" fill="#5aa0f0"/>
<circle cx="643.59" cy="155.36" r="1.55" fill="#5aa0f0"/>
<circle cx="646.04" cy="157.45" r="1.55" fill="#5aa0f0"/>
<circle cx="648.49" cy="157.92" r="1.55" fill="#5aa0f0"/>
<circle cx="650.94" cy="155.08" r="1.55" fill="#5aa0f0"/>
<circle cx="653.39" cy="154.16" r="1.55" fill="#5aa0f0"/>
<circle cx="655.84" cy="154.82" r="1.55" fill="#5aa0f0"/>
<circle cx="658.29" cy="153.42" r="1.55" fill="#5aa0f0"/>
<circle cx="660.74" cy="153.99" r="1.55" fill="#5aa0f0"/>
<circle cx="663.19" cy="152.74" r="1.55" fill="#5aa0f0"/>
<circle cx="665.64" cy="154.4" r="1.55" fill="#5aa0f0"/>
<circle cx="668.09" cy="156.48" r="1.55" fill="#5aa0f0"/>
<circle cx="670.54" cy="158.95" r="1.55" fill="#5aa0f0"/>
<rect x="363.4" y="205.5" width="8.3" height="2.6" rx="1.2" fill="#5ea0ec"/>
<text x="380.7" y="209.5" font-size="8" fill="#d0d1d5" text-anchor="start" font-weight="400" stroke="#d0d1d5" stroke-width="0.18" textLength="24.5" lengthAdjust="spacingAndGlyphs">logins</text>
<rect x="412" y="205.5" width="8.3" height="2.6" rx="1.2" fill="#b27ad0"/>
<text x="428.9" y="209.5" font-size="8" fill="#d0d1d5" text-anchor="start" font-weight="400" stroke="#d0d1d5" stroke-width="0.18">logins (-1 hour)</text>
<circle cx="618.7" cy="70.2" r="3.4" fill="none" stroke="#3b94e6" stroke-width="1"/><path d="M618.7,68.3 V70.4 H620.2" fill="none" stroke="#3b94e6" stroke-width="0.9"/>
<text x="625" y="73" font-size="8.1" fill="#3b94e6" text-anchor="start" font-weight="400" stroke="#3b94e6" stroke-width="0.3">Last 20 minutes</text>
<text x="699.1" y="72.6" font-size="9.3" fill="#d8d9dd" text-anchor="start" font-weight="400" stroke="#d8d9dd" stroke-width="0.25" textLength="34" lengthAdjust="spacingAndGlyphs">Memory</text>
<path d="M738.81,138.86 A39.2,39.2 0 0 1 799.34,95.69" fill="none" stroke="#6cb05f" stroke-width="1.5"/>
<path d="M799.34,95.69 A39.2,39.2 0 0 1 810.25,107.8" fill="none" stroke="#e8913a" stroke-width="1.5"/>
<path d="M810.25,107.8 A39.2,39.2 0 0 1 815.35,123.98" fill="none" stroke="#e46d36" stroke-width="1.5"/>
<path d="M815.35,123.98 A39.2,39.2 0 0 1 813.79,138.86" fill="none" stroke="#e0483c" stroke-width="1.5"/>
<path d="M745.54,136.22 A32.0,32.0 0 1 1 807.06,136.22" fill="none" stroke="#242428" stroke-width="10.5"/>
<path d="M745.54,136.22 A32.0,32.0 0 0 1 764,97.86" fill="none" stroke="#6aaa5e" stroke-width="10.5"/>
<text x="776.3" y="136.2" font-size="14.6" fill="#6cb05f" text-anchor="middle" font-weight="400" stroke="#6cb05f" stroke-width="0.35" textLength="34.3" lengthAdjust="spacingAndGlyphs">114 B</text>
<text x="870" y="72.6" font-size="9.3" fill="#d8d9dd" text-anchor="start" font-weight="400" stroke="#d8d9dd" stroke-width="0.25" textLength="47.3" lengthAdjust="spacingAndGlyphs">Google hits</text>
<path d="M910.95,136.92 A37.7,37.7 0 0 1 969.16,95.4" fill="none" stroke="#6cb05f" stroke-width="1.5"/>
<path d="M969.16,95.4 A37.7,37.7 0 0 1 979.65,107.05" fill="none" stroke="#e8913a" stroke-width="1.5"/>
<path d="M979.65,107.05 A37.7,37.7 0 0 1 984.56,122.61" fill="none" stroke="#e46d36" stroke-width="1.5"/>
<path d="M984.56,122.61 A37.7,37.7 0 0 1 983.05,136.92" fill="none" stroke="#e0483c" stroke-width="1.5"/>
<path d="M917.68,134.31 A30.5,30.5 0 1 1 976.32,134.31" fill="none" stroke="#242428" stroke-width="10.5"/>
<path d="M917.68,134.31 A30.5,30.5 0 0 1 919.14,113.49" fill="none" stroke="#6aaa5e" stroke-width="10.5"/>
<text x="947" y="137.2" font-size="18.5" fill="#6cb05f" text-anchor="middle" font-weight="400" stroke="#6cb05f" stroke-width="0.35" textLength="28.9" lengthAdjust="spacingAndGlyphs">57.1</text>
<text x="699.1" y="166.8" font-size="9.3" fill="#d8d9dd" text-anchor="start" font-weight="400" stroke="#d8d9dd" stroke-width="0.25" textLength="55" lengthAdjust="spacingAndGlyphs">Support calls</text>
<path d="M694.61,203.79 L697.82,203.79 L701.03,206.2 L703.44,202.99 L705.52,196.56 L707.45,205.39 L709.86,204.59 L712.27,206.2 L715.48,203.79 L717.89,201.38 L720.3,206.2 L723.51,203.79 L725.51,201.73 L727.52,201.06 L730.73,207 L732.74,205.83 L734.75,203.79 L736.75,206.92 L738.76,209.41 L741.97,203.79 L744.38,207.8 L746.39,205.08 L748.39,203.79 L750.4,203.75 L752.41,202.18 L754.42,203.52 L756.42,202.99 L758.83,202.18 L760.84,203.63 L762.85,206.2 L765.25,202.99 L768.47,205.39 L771.68,202.99 L774.89,201.38 L777.3,203.89 L779.71,204.59 L782.11,202.78 L784.52,201.38 L787.73,204.59 L789.34,201.38 L791.48,202.43 L793.62,204.5 L795.76,204.59 L798.97,207 L801.38,209.67 L803.79,211.01 L805.8,207.13 L807.8,204.59 L810.21,211.01 L813.42,206.2 L815.43,211.68 L817.44,217.44 L820.65,196.56 L822.66,197.8 L824.66,198.97 L827.07,201.38 L828.68,199.78 L830.28,205.39 L832.69,202.18 L835.9,206.2 L838.04,205.61 L840.18,205.05 L842.33,205.39 L844.2,204.5 L846.07,204.77 L847.95,203.79 L851.16,210.21 L854.37,205.39 L857.1,207 L857.1,218.3 L694.61,218.3 Z" fill="#4a2224"/>
<path d="M694.61,203.79 L697.82,203.79 L701.03,206.2 L703.44,202.99 L705.52,196.56 L707.45,205.39 L709.86,204.59 L712.27,206.2 L715.48,203.79 L717.89,201.38 L720.3,206.2 L723.51,203.79 L725.51,201.73 L727.52,201.06 L730.73,207 L732.74,205.83 L734.75,203.79 L736.75,206.92 L738.76,209.41 L741.97,203.79 L744.38,207.8 L746.39,205.08 L748.39,203.79 L750.4,203.75 L752.41,202.18 L754.42,203.52 L756.42,202.99 L758.83,202.18 L760.84,203.63 L762.85,206.2 L765.25,202.99 L768.47,205.39 L771.68,202.99 L774.89,201.38 L777.3,203.89 L779.71,204.59 L782.11,202.78 L784.52,201.38 L787.73,204.59 L789.34,201.38 L791.48,202.43 L793.62,204.5 L795.76,204.59 L798.97,207 L801.38,209.67 L803.79,211.01 L805.8,207.13 L807.8,204.59 L810.21,211.01 L813.42,206.2 L815.43,211.68 L817.44,217.44 L820.65,196.56 L822.66,197.8 L824.66,198.97 L827.07,201.38 L828.68,199.78 L830.28,205.39 L832.69,202.18 L835.9,206.2 L838.04,205.61 L840.18,205.05 L842.33,205.39 L844.2,204.5 L846.07,204.77 L847.95,203.79 L851.16,210.21 L854.37,205.39 L857.1,207" fill="none" stroke="#d8513f" stroke-width="1.1" stroke-linejoin="round"/>
<text x="776.3" y="201.1" font-size="15" fill="#e0483f" text-anchor="middle" font-weight="400" stroke="#e0483f" stroke-width="0.35" textLength="30.1" lengthAdjust="spacingAndGlyphs">84.9</text>
<text x="870" y="166.8" font-size="9.3" fill="#d8d9dd" text-anchor="start" font-weight="400" stroke="#d8d9dd" stroke-width="0.25" textLength="35.7" lengthAdjust="spacingAndGlyphs">Sign ups</text>
<path d="M865.29,210.58 L867.47,206.79 L869.65,204.93 L872.89,208.16 L876.12,202.5 L879.35,204.12 L881.77,202.5 L885,205.74 L887.42,212.2 L889.85,205.74 L893.08,208.16 L895.5,205.44 L897.93,202.5 L901.16,207.35 L903.18,206.42 L905.2,205.74 L907.62,206.79 L910.04,209.77 L912.47,204.93 L915.7,210.58 L917.58,207.01 L919.47,204.37 L921.35,200.89 L924.58,205.74 L927.81,203.31 L929.7,204.95 L931.58,205.67 L933.47,208.16 L935.49,207.92 L937.51,205.74 L939.39,206.58 L941.28,207.22 L943.16,206.54 L945.58,204.94 L948.01,204.93 L950.03,205.27 L952.05,206.54 L954.06,203.2 L956.08,201.7 L958.1,204.27 L960.12,205.74 L963.35,204.12 L965.37,204.47 L967.39,205.74 L969.41,206.21 L971.43,208.16 L973.85,205.74 L977.09,210.58 L980.32,205.74 L982.74,211.39 L984.76,214.06 L986.78,217.04 L990.01,213 L993.24,196.04 L995.26,198.88 L997.28,200.08 L1000.51,208.97 L1002.93,206.54 L1004.95,207.99 L1006.97,208.16 L1009.4,206.54 L1011.28,206.06 L1013.17,205.84 L1015.05,206.54 L1017.07,206.57 L1019.09,204.93 L1021.51,210.58 L1023.94,207.35 L1025.95,207.09 L1027.97,206.54 L1027.97,218.3 L865.29,218.3 Z" fill="#243d22"/>
<path d="M865.29,210.58 L867.47,206.79 L869.65,204.93 L872.89,208.16 L876.12,202.5 L879.35,204.12 L881.77,202.5 L885,205.74 L887.42,212.2 L889.85,205.74 L893.08,208.16 L895.5,205.44 L897.93,202.5 L901.16,207.35 L903.18,206.42 L905.2,205.74 L907.62,206.79 L910.04,209.77 L912.47,204.93 L915.7,210.58 L917.58,207.01 L919.47,204.37 L921.35,200.89 L924.58,205.74 L927.81,203.31 L929.7,204.95 L931.58,205.67 L933.47,208.16 L935.49,207.92 L937.51,205.74 L939.39,206.58 L941.28,207.22 L943.16,206.54 L945.58,204.94 L948.01,204.93 L950.03,205.27 L952.05,206.54 L954.06,203.2 L956.08,201.7 L958.1,204.27 L960.12,205.74 L963.35,204.12 L965.37,204.47 L967.39,205.74 L969.41,206.21 L971.43,208.16 L973.85,205.74 L977.09,210.58 L980.32,205.74 L982.74,211.39 L984.76,214.06 L986.78,217.04 L990.01,213 L993.24,196.04 L995.26,198.88 L997.28,200.08 L1000.51,208.97 L1002.93,206.54 L1004.95,207.99 L1006.97,208.16 L1009.4,206.54 L1011.28,206.06 L1013.17,205.84 L1015.05,206.54 L1017.07,206.57 L1019.09,204.93 L1021.51,210.58 L1023.94,207.35 L1025.95,207.09 L1027.97,206.54" fill="none" stroke="#4fae45" stroke-width="1.1" stroke-linejoin="round"/>
<text x="947.2" y="201.7" font-size="16.2" fill="#4fae45" text-anchor="middle" font-weight="400" stroke="#4fae45" stroke-width="0.35" textLength="26.8" lengthAdjust="spacingAndGlyphs">283</text>
<text x="349.5" y="237.3" font-size="9.3" fill="#d8d9dd" text-anchor="middle" font-weight="400" stroke="#d8d9dd" stroke-width="0.25" textLength="65" lengthAdjust="spacingAndGlyphs">server requests</text>
<line x1="34.8" y1="255.6" x2="672.3" y2="255.6" stroke="#2d3530" stroke-width="1"/>
<text x="28.2" y="258.3" font-size="7.6" fill="#d0d1d5" text-anchor="end" font-weight="400" stroke="#d0d1d5" stroke-width="0.18">150</text>
<line x1="34.8" y1="293.53" x2="672.3" y2="293.53" stroke="#2d3530" stroke-width="1"/>
<text x="28.2" y="296.23" font-size="7.6" fill="#d0d1d5" text-anchor="end" font-weight="400" stroke="#d0d1d5" stroke-width="0.18">100</text>
<line x1="34.8" y1="331.47" x2="672.3" y2="331.47" stroke="#2d3530" stroke-width="1"/>
<text x="28.2" y="334.17" font-size="7.6" fill="#d0d1d5" text-anchor="end" font-weight="400" stroke="#d0d1d5" stroke-width="0.18">50</text>
<line x1="34.8" y1="369.4" x2="672.3" y2="369.4" stroke="#2d3530" stroke-width="1"/>
<text x="28.2" y="372.1" font-size="7.6" fill="#d0d1d5" text-anchor="end" font-weight="400" stroke="#d0d1d5" stroke-width="0.18">0</text>
<line x1="34.8" y1="255.6" x2="34.8" y2="369.4" stroke="#2d3530" stroke-width="1"/>
<text x="34.8" y="382" font-size="7.6" fill="#d0d1d5" text-anchor="middle" font-weight="400" stroke="#d0d1d5" stroke-width="0.18">16:50</text>
<line x1="88.15" y1="255.6" x2="88.15" y2="369.4" stroke="#2d3530" stroke-width="1"/>
<text x="88.15" y="382" font-size="7.6" fill="#d0d1d5" text-anchor="middle" font-weight="400" stroke="#d0d1d5" stroke-width="0.18">16:55</text>
<line x1="141.5" y1="255.6" x2="141.5" y2="369.4" stroke="#2d3530" stroke-width="1"/>
<text x="141.5" y="382" font-size="7.6" fill="#d0d1d5" text-anchor="middle" font-weight="400" stroke="#d0d1d5" stroke-width="0.18">17:00</text>
<line x1="194.85" y1="255.6" x2="194.85" y2="369.4" stroke="#2d3530" stroke-width="1"/>
<text x="194.85" y="382" font-size="7.6" fill="#d0d1d5" text-anchor="middle" font-weight="400" stroke="#d0d1d5" stroke-width="0.18">17:05</text>
<line x1="248.2" y1="255.6" x2="248.2" y2="369.4" stroke="#2d3530" stroke-width="1"/>
<text x="248.2" y="382" font-size="7.6" fill="#d0d1d5" text-anchor="middle" font-weight="400" stroke="#d0d1d5" stroke-width="0.18">17:10</text>
<line x1="301.55" y1="255.6" x2="301.55" y2="369.4" stroke="#2d3530" stroke-width="1"/>
<text x="301.55" y="382" font-size="7.6" fill="#d0d1d5" text-anchor="middle" font-weight="400" stroke="#d0d1d5" stroke-width="0.18">17:15</text>
<line x1="354.9" y1="255.6" x2="354.9" y2="369.4" stroke="#2d3530" stroke-width="1"/>
<text x="354.9" y="382" font-size="7.6" fill="#d0d1d5" text-anchor="middle" font-weight="400" stroke="#d0d1d5" stroke-width="0.18">17:20</text>
<line x1="408.25" y1="255.6" x2="408.25" y2="369.4" stroke="#2d3530" stroke-width="1"/>
<text x="408.25" y="382" font-size="7.6" fill="#d0d1d5" text-anchor="middle" font-weight="400" stroke="#d0d1d5" stroke-width="0.18">17:25</text>
<line x1="461.6" y1="255.6" x2="461.6" y2="369.4" stroke="#2d3530" stroke-width="1"/>
<text x="461.6" y="382" font-size="7.6" fill="#d0d1d5" text-anchor="middle" font-weight="400" stroke="#d0d1d5" stroke-width="0.18">17:30</text>
<line x1="514.95" y1="255.6" x2="514.95" y2="369.4" stroke="#2d3530" stroke-width="1"/>
<text x="514.95" y="382" font-size="7.6" fill="#d0d1d5" text-anchor="middle" font-weight="400" stroke="#d0d1d5" stroke-width="0.18">17:35</text>
<line x1="568.3" y1="255.6" x2="568.3" y2="369.4" stroke="#2d3530" stroke-width="1"/>
<text x="568.3" y="382" font-size="7.6" fill="#d0d1d5" text-anchor="middle" font-weight="400" stroke="#d0d1d5" stroke-width="0.18">17:40</text>
<line x1="621.65" y1="255.6" x2="621.65" y2="369.4" stroke="#2d3530" stroke-width="1"/>
<text x="621.65" y="382" font-size="7.6" fill="#d0d1d5" text-anchor="middle" font-weight="400" stroke="#d0d1d5" stroke-width="0.18">17:45</text>
<path d="M33.2,347.62 L35.33,349.13 L37.46,348.96 L39.6,347.59 L41.73,347.75 L43.86,348.15 L45.99,347.14 L48.12,348.13 L50.26,348.06 L52.39,348.74 L54.52,347.64 L56.65,348.08 L58.79,347.09 L60.92,347.58 L63.05,347.93 L65.18,347.63 L67.31,347.54 L69.45,347.91 L71.58,349.16 L73.71,347.82 L75.84,348.89 L77.97,348.15 L80.11,348.69 L82.24,349.42 L84.37,349.62 L86.5,349.25 L88.63,348.57 L90.77,347.84 L92.9,348.94 L95.03,348.87 L97.16,348.5 L99.3,348.4 L101.43,349.1 L103.56,349.3 L105.69,348.99 L107.82,349.14 L109.96,348.47 L112.09,348.56 L114.22,347.64 L116,347.43 L116.35,347.71 L118.48,347.81 L120.62,348.35 L122.75,348.36 L124.88,346.86 L127.01,347.57 L129.14,348.21 L131.28,348.44 L133.41,347.22 L135.54,347.47 L137.67,347.54 L139.81,347.76 L141.94,347.21 L144.07,347.16 L146.2,348.49 L148.33,349.32 L150.47,349.09 L152.6,349.18 L154.73,348.05 L156.86,348.97 L158.99,348.29 L161.13,348.61 L163.26,348.14 L165.39,348.07 L167.52,346.84 L169.65,348.3 L171.79,347.85 L173.92,348.88 L176.05,348.76 L178.18,348.24 L180.32,348.77 L182.45,347.89 L184.58,347.77 L186.71,347.73 L188.84,347.92 L190.98,348.15 L193.11,347.17 L195.24,347.22 L197.37,348.66 L199.5,348.87 L201.64,349.02 L203.77,347.66 L205.9,348.77 L208.03,349.2 L210.16,348.98 L212.3,348.98 L214.43,348.19 L216.56,348.42 L218.69,348.38 L220.83,348.27 L222.96,348.57 L225.09,349.25 L227.22,349.41 L229.35,347.79 L231.49,347.86 L233.62,348.54 L235.75,347.45 L237.88,347.73 L240.01,347.44 L242.15,347.95 L244.28,348.54 L246.41,348.16 L248.54,348.43 L250.67,348 L252.81,346.99 L254.94,348.96 L257.07,347.11 L259.2,347.83 L261.34,347.69 L263.47,346.9 L265.6,346.75 L267.73,348.11 L269.86,348.66 L272,348.02 L274.13,347.76 L276.26,346.72 L278.39,347.66 L280.52,347.62 L282.66,346.55 L284.79,347.97 L286.92,347.45 L289.05,347.46 L291.18,348.16 L293.32,349.5 L295.45,349.37 L297.58,349.57 L299.71,347.48 L301.85,348.37 L303.98,347.46 L306.11,347.14 L308.24,347.86 L310.37,348.13 L312.51,347.81 L314.64,347.75 L316.77,348 L318.9,347.46 L321.03,348.11 L323.17,348.04 L325.3,349.13 L327.43,347.54 L329.56,347.64 L331.69,348.5 L333.83,348.05 L335.96,348.87 L338.09,348.87 L340.22,348.01 L342.36,346.69 L344.49,346.95 L346.62,348.11 L348.75,348.37 L350.88,347.87 L353.02,347.53 L355.15,346.92 L357.28,348.04 L359.41,347.82 L361.54,348.26 L363.68,348.2 L365.81,347.69 L367.94,348.15 L370.07,348.37 L372.21,348.96 L374.34,349.18 L376.47,348.45 L378.6,348.95 L380.73,348.4 L382.87,347.36 L385,348.5 L387.13,348.71 L389.26,348.78 L391.39,348.01 L393.53,348.81 L395.66,347.1 L397.79,347.7 L399.92,346.82 L402.05,347.54 L404.19,348.76 L406.32,348.74 L408.45,347.68 L410.58,346.89 L412.72,347.67 L414.85,348.46 L416.98,348.53 L419.11,347.49 L421.24,347.91 L423.38,347.63 L425.51,347.94 L427.64,348 L429.77,348.15 L431.9,347.7 L434.04,348.04 L436.17,347.72 L438.3,347.6 L440.43,347.02 L442.56,348.43 L444.7,347.86 L446.83,348.09 L448.96,348.96 L451.09,348.31 L453.23,348.43 L455.36,348.66 L457.49,348.65 L459.62,348.01 L461.75,348.64 L463.89,349.04 L466.02,347.48 L468.15,348.37 L470.28,347.3 L472.41,348.2 L474.55,348.28 L476.68,347.12 L478.81,346.98 L480.94,346.56 L483.07,348.48 L485.21,348.35 L487.34,348.74 L489.47,347.93 L491.6,346.85 L493.74,347.79 L495.87,347.39 L498,348.51 L500.13,348.21 L502.26,349.05 L504.4,348.52 L506.53,347.95 L508.66,346.99 L510.79,348.72 L512.92,348.23 L515.06,348.03 L517.19,348.95 L519.32,348.68 L521.45,348.19 L523.58,347.63 L525.72,347.33 L527.85,346.87 L529.98,346.43 L532.11,346.82 L534.25,347.4 L536.38,347.84 L538.51,349.35 L540.64,350.92 L542.77,352.05 L544.91,352.93 L547.04,351.48 L549.17,351.78 L551.3,353.1 L553.43,352.63 L555.57,350.53 L557.7,347.61 L559.83,345.01 L561.96,345.27 L564.09,344.67 L566.23,343.26 L568.36,344.25 L570.49,344.27 L572.62,344.58 L574.76,343.49 L576.89,344.6 L579.02,344.58 L581.15,346.21 L583.28,347.5 L585.42,345.9 L587.55,345.07 L589.68,345.85 L591.81,346.11 L593.94,345.46 L596.08,347.31 L598.21,348.9 L600.34,347.91 L602.47,348.95 L604.6,348.22 L606.74,349.09 L608.87,348.32 L611,348.91 L613.13,348.94 L615.27,348.5 L617.4,347.46 L619.53,347.63 L621.66,347.39 L623.79,348.6 L625.93,347.96 L628.06,348.49 L630.19,348.73 L632.32,349.27 L634.45,348.17 L636.59,348.35 L638.72,347.58 L640.85,348.57 L642.98,347.54 L645.11,347.62 L647.25,347.63 L649.38,348.99 L651.51,349.01 L653.64,347.67 L655.78,346.91 L657.91,347.36 L660.04,347.81 L662.17,347.44 L664.3,348.82 L666.44,347.51 L668.57,347.39 L670.7,347.29 L670.7,369.4 L668.57,369.4 L666.44,369.4 L664.3,369.4 L662.17,369.4 L660.04,369.4 L657.91,369.4 L655.78,369.4 L653.64,369.4 L651.51,369.4 L649.38,369.4 L647.25,369.4 L645.11,369.4 L642.98,369.4 L640.85,369.4 L638.72,369.4 L636.59,369.4 L634.45,369.4 L632.32,369.4 L630.19,369.4 L628.06,369.4 L625.93,369.4 L623.79,369.4 L621.66,369.4 L619.53,369.4 L617.4,369.4 L615.27,369.4 L613.13,369.4 L611,369.4 L608.87,369.4 L606.74,369.4 L604.6,369.4 L602.47,369.4 L600.34,369.4 L598.21,369.4 L596.08,369.4 L593.94,369.4 L591.81,369.4 L589.68,369.4 L587.55,369.4 L585.42,369.4 L583.28,369.4 L581.15,369.4 L579.02,369.4 L576.89,369.4 L574.76,369.4 L572.62,369.4 L570.49,369.4 L568.36,369.4 L566.23,369.4 L564.09,369.4 L561.96,369.4 L559.83,369.4 L557.7,369.4 L555.57,369.4 L553.43,369.4 L551.3,369.4 L549.17,369.4 L547.04,369.4 L544.91,369.4 L542.77,369.4 L540.64,369.4 L538.51,369.4 L536.38,369.4 L534.25,369.4 L532.11,369.4 L529.98,369.4 L527.85,369.4 L525.72,369.4 L523.58,369.4 L521.45,369.4 L519.32,369.4 L517.19,369.4 L515.06,369.4 L512.92,369.4 L510.79,369.4 L508.66,369.4 L506.53,369.4 L504.4,369.4 L502.26,369.4 L500.13,369.4 L498,369.4 L495.87,369.4 L493.74,369.4 L491.6,369.4 L489.47,369.4 L487.34,369.4 L485.21,369.4 L483.07,369.4 L480.94,369.4 L478.81,369.4 L476.68,369.4 L474.55,369.4 L472.41,369.4 L470.28,369.4 L468.15,369.4 L466.02,369.4 L463.89,369.4 L461.75,369.4 L459.62,369.4 L457.49,369.4 L455.36,369.4 L453.23,369.4 L451.09,369.4 L448.96,369.4 L446.83,369.4 L444.7,369.4 L442.56,369.4 L440.43,369.4 L438.3,369.4 L436.17,369.4 L434.04,369.4 L431.9,369.4 L429.77,369.4 L427.64,369.4 L425.51,369.4 L423.38,369.4 L421.24,369.4 L419.11,369.4 L416.98,369.4 L414.85,369.4 L412.72,369.4 L410.58,369.4 L408.45,369.4 L406.32,369.4 L404.19,369.4 L402.05,369.4 L399.92,369.4 L397.79,369.4 L395.66,369.4 L393.53,369.4 L391.39,369.4 L389.26,369.4 L387.13,369.4 L385,369.4 L382.87,369.4 L380.73,369.4 L378.6,369.4 L376.47,369.4 L374.34,369.4 L372.21,369.4 L370.07,369.4 L367.94,369.4 L365.81,369.4 L363.68,369.4 L361.54,369.4 L359.41,369.4 L357.28,369.4 L355.15,369.4 L353.02,369.4 L350.88,369.4 L348.75,369.4 L346.62,369.4 L344.49,369.4 L342.36,369.4 L340.22,369.4 L338.09,369.4 L335.96,369.4 L333.83,369.4 L331.69,369.4 L329.56,369.4 L327.43,369.4 L325.3,369.4 L323.17,369.4 L321.03,369.4 L318.9,369.4 L316.77,369.4 L314.64,369.4 L312.51,369.4 L310.37,369.4 L308.24,369.4 L306.11,369.4 L303.98,369.4 L301.85,369.4 L299.71,369.4 L297.58,369.4 L295.45,369.4 L293.32,369.4 L291.18,369.4 L289.05,369.4 L286.92,369.4 L284.79,369.4 L282.66,369.4 L280.52,369.4 L278.39,369.4 L276.26,369.4 L274.13,369.4 L272,369.4 L269.86,369.4 L267.73,369.4 L265.6,369.4 L263.47,369.4 L261.34,369.4 L259.2,369.4 L257.07,369.4 L254.94,369.4 L252.81,369.4 L250.67,369.4 L248.54,369.4 L246.41,369.4 L244.28,369.4 L242.15,369.4 L240.01,369.4 L237.88,369.4 L235.75,369.4 L233.62,369.4 L231.49,369.4 L229.35,369.4 L227.22,369.4 L225.09,369.4 L222.96,369.4 L220.83,369.4 L218.69,369.4 L216.56,369.4 L214.43,369.4 L212.3,369.4 L210.16,369.4 L208.03,369.4 L205.9,369.4 L203.77,369.4 L201.64,369.4 L199.5,369.4 L197.37,369.4 L195.24,369.4 L193.11,369.4 L190.98,369.4 L188.84,369.4 L186.71,369.4 L184.58,369.4 L182.45,369.4 L180.32,369.4 L178.18,369.4 L176.05,369.4 L173.92,369.4 L171.79,369.4 L169.65,369.4 L167.52,369.4 L165.39,369.4 L163.26,369.4 L161.13,369.4 L158.99,369.4 L156.86,369.4 L154.73,369.4 L152.6,369.4 L150.47,369.4 L148.33,369.4 L146.2,369.4 L144.07,369.4 L141.94,369.4 L139.81,369.4 L137.67,369.4 L135.54,369.4 L133.41,369.4 L131.28,369.4 L129.14,369.4 L127.01,369.4 L124.88,369.4 L122.75,369.4 L120.62,369.4 L118.48,369.4 L116.35,369.4 L116,369.4 L114.22,369.4 L112.09,369.4 L109.96,369.4 L107.82,369.4 L105.69,369.4 L103.56,369.4 L101.43,369.4 L99.3,369.4 L97.16,369.4 L95.03,369.4 L92.9,369.4 L90.77,369.4 L88.63,369.4 L86.5,369.4 L84.37,369.4 L82.24,369.4 L80.11,369.4 L77.97,369.4 L75.84,369.4 L73.71,369.4 L71.58,369.4 L69.45,369.4 L67.31,369.4 L65.18,369.4 L63.05,369.4 L60.92,369.4 L58.79,369.4 L56.65,369.4 L54.52,369.4 L52.39,369.4 L50.26,369.4 L48.12,369.4 L45.99,369.4 L43.86,369.4 L41.73,369.4 L39.6,369.4 L37.46,369.4 L35.33,369.4 L33.2,369.4 Z" fill="#8c9aa4"/>
<path d="M33.2,347.62 L35.33,349.13 L37.46,348.96 L39.6,347.59 L41.73,347.75 L43.86,348.15 L45.99,347.14 L48.12,348.13 L50.26,348.06 L52.39,348.74 L54.52,347.64 L56.65,348.08 L58.79,347.09 L60.92,347.58 L63.05,347.93 L65.18,347.63 L67.31,347.54 L69.45,347.91 L71.58,349.16 L73.71,347.82 L75.84,348.89 L77.97,348.15 L80.11,348.69 L82.24,349.42 L84.37,349.62 L86.5,349.25 L88.63,348.57 L90.77,347.84 L92.9,348.94 L95.03,348.87 L97.16,348.5 L99.3,348.4 L101.43,349.1 L103.56,349.3 L105.69,348.99 L107.82,349.14 L109.96,348.47 L112.09,348.56 L114.22,347.64 L116,347.43 L116.35,347.71 L118.48,347.81 L120.62,348.35 L122.75,348.36 L124.88,346.86 L127.01,347.57 L129.14,348.21 L131.28,348.44 L133.41,347.22 L135.54,347.47 L137.67,347.54 L139.81,347.76 L141.94,347.21 L144.07,347.16 L146.2,348.49 L148.33,349.32 L150.47,349.09 L152.6,349.18 L154.73,348.05 L156.86,348.97 L158.99,348.29 L161.13,348.61 L163.26,348.14 L165.39,348.07 L167.52,346.84 L169.65,348.3 L171.79,347.85 L173.92,348.88 L176.05,348.76 L178.18,348.24 L180.32,348.77 L182.45,347.89 L184.58,347.77 L186.71,347.73 L188.84,347.92 L190.98,348.15 L193.11,347.17 L195.24,347.22 L197.37,348.66 L199.5,348.87 L201.64,349.02 L203.77,347.66 L205.9,348.77 L208.03,349.2 L210.16,348.98 L212.3,348.98 L214.43,348.19 L216.56,348.42 L218.69,348.38 L220.83,348.27 L222.96,348.57 L225.09,349.25 L227.22,349.41 L229.35,347.79 L231.49,347.86 L233.62,348.54 L235.75,347.45 L237.88,347.73 L240.01,347.44 L242.15,347.95 L244.28,348.54 L246.41,348.16 L248.54,348.43 L250.67,348 L252.81,346.99 L254.94,348.96 L257.07,347.11 L259.2,347.83 L261.34,347.69 L263.47,346.9 L265.6,346.75 L267.73,348.11 L269.86,348.66 L272,348.02 L274.13,347.76 L276.26,346.72 L278.39,347.66 L280.52,347.62 L282.66,346.55 L284.79,347.97 L286.92,347.45 L289.05,347.46 L291.18,348.16 L293.32,349.5 L295.45,349.37 L297.58,349.57 L299.71,347.48 L301.85,348.37 L303.98,347.46 L306.11,347.14 L308.24,347.86 L310.37,348.13 L312.51,347.81 L314.64,347.75 L316.77,348 L318.9,347.46 L321.03,348.11 L323.17,348.04 L325.3,349.13 L327.43,347.54 L329.56,347.64 L331.69,348.5 L333.83,348.05 L335.96,348.87 L338.09,348.87 L340.22,348.01 L342.36,346.69 L344.49,346.95 L346.62,348.11 L348.75,348.37 L350.88,347.87 L353.02,347.53 L355.15,346.92 L357.28,348.04 L359.41,347.82 L361.54,348.26 L363.68,348.2 L365.81,347.69 L367.94,348.15 L370.07,348.37 L372.21,348.96 L374.34,349.18 L376.47,348.45 L378.6,348.95 L380.73,348.4 L382.87,347.36 L385,348.5 L387.13,348.71 L389.26,348.78 L391.39,348.01 L393.53,348.81 L395.66,347.1 L397.79,347.7 L399.92,346.82 L402.05,347.54 L404.19,348.76 L406.32,348.74 L408.45,347.68 L410.58,346.89 L412.72,347.67 L414.85,348.46 L416.98,348.53 L419.11,347.49 L421.24,347.91 L423.38,347.63 L425.51,347.94 L427.64,348 L429.77,348.15 L431.9,347.7 L434.04,348.04 L436.17,347.72 L438.3,347.6 L440.43,347.02 L442.56,348.43 L444.7,347.86 L446.83,348.09 L448.96,348.96 L451.09,348.31 L453.23,348.43 L455.36,348.66 L457.49,348.65 L459.62,348.01 L461.75,348.64 L463.89,349.04 L466.02,347.48 L468.15,348.37 L470.28,347.3 L472.41,348.2 L474.55,348.28 L476.68,347.12 L478.81,346.98 L480.94,346.56 L483.07,348.48 L485.21,348.35 L487.34,348.74 L489.47,347.93 L491.6,346.85 L493.74,347.79 L495.87,347.39 L498,348.51 L500.13,348.21 L502.26,349.05 L504.4,348.52 L506.53,347.95 L508.66,346.99 L510.79,348.72 L512.92,348.23 L515.06,348.03 L517.19,348.95 L519.32,348.68 L521.45,348.19 L523.58,347.63 L525.72,347.33 L527.85,346.87 L529.98,346.43 L532.11,346.82 L534.25,347.4 L536.38,347.84 L538.51,349.35 L540.64,350.92 L542.77,352.05 L544.91,352.93 L547.04,351.48 L549.17,351.78 L551.3,353.1 L553.43,352.63 L555.57,350.53 L557.7,347.61 L559.83,345.01 L561.96,345.27 L564.09,344.67 L566.23,343.26 L568.36,344.25 L570.49,344.27 L572.62,344.58 L574.76,343.49 L576.89,344.6 L579.02,344.58 L581.15,346.21 L583.28,347.5 L585.42,345.9 L587.55,345.07 L589.68,345.85 L591.81,346.11 L593.94,345.46 L596.08,347.31 L598.21,348.9 L600.34,347.91 L602.47,348.95 L604.6,348.22 L606.74,349.09 L608.87,348.32 L611,348.91 L613.13,348.94 L615.27,348.5 L617.4,347.46 L619.53,347.63 L621.66,347.39 L623.79,348.6 L625.93,347.96 L628.06,348.49 L630.19,348.73 L632.32,349.27 L634.45,348.17 L636.59,348.35 L638.72,347.58 L640.85,348.57 L642.98,347.54 L645.11,347.62 L647.25,347.63 L649.38,348.99 L651.51,349.01 L653.64,347.67 L655.78,346.91 L657.91,347.36 L660.04,347.81 L662.17,347.44 L664.3,348.82 L666.44,347.51 L668.57,347.39 L670.7,347.29" fill="none" stroke="#b9c3c9" stroke-width="1"/>
<path d="M33.2,326.01 L35.33,327 L37.46,328.56 L39.6,326.09 L41.73,325.31 L43.86,326.33 L45.99,325.62 L48.12,326.39 L50.26,325.58 L52.39,326.96 L54.52,325.46 L56.65,327.34 L58.79,325.3 L60.92,324.98 L63.05,325.28 L65.18,326.63 L67.31,324.72 L69.45,325.33 L71.58,328.73 L73.71,325.41 L75.84,328.31 L77.97,326.95 L80.11,327.74 L82.24,328.58 L84.37,329.38 L86.5,328.54 L88.63,327.38 L90.77,326.16 L92.9,327.05 L95.03,327.24 L97.16,327.32 L99.3,328.07 L101.43,328.03 L103.56,328.44 L105.69,329.02 L107.82,327.07 L109.96,326.09 L112.09,327.29 L114.22,324.05 L116,318.96 L116.35,321.51 L118.48,324.94 L120.62,326.43 L122.75,327.2 L124.88,324.42 L127.01,325.38 L129.14,327.08 L131.28,325.78 L133.41,325.09 L135.54,324.62 L137.67,324.19 L139.81,324.94 L141.94,325.46 L144.07,324.88 L146.2,326.84 L148.33,327.15 L150.47,328.94 L152.6,327.77 L154.73,325.41 L156.86,327.12 L158.99,326.56 L161.13,328.51 L163.26,325.31 L165.39,325.59 L167.52,323.3 L169.65,325.43 L171.79,326.99 L173.92,326.86 L176.05,326.27 L178.18,327.98 L180.32,327.66 L182.45,326.08 L184.58,326.17 L186.71,323.92 L188.84,325.74 L190.98,325.5 L193.11,325.18 L195.24,325.08 L197.37,325.92 L199.5,328.4 L201.64,328.26 L203.77,326.13 L205.9,327.44 L208.03,328.85 L210.16,328.04 L212.3,328.74 L214.43,326.27 L216.56,327.32 L218.69,326.47 L220.83,328.28 L222.96,327.53 L225.09,329.32 L227.22,328.54 L229.35,326.08 L231.49,326.46 L233.62,325.51 L235.75,324.93 L237.88,324.97 L240.01,323.65 L242.15,326.38 L244.28,325.53 L246.41,325.12 L248.54,326.76 L250.67,325.06 L252.81,325.08 L254.94,326.42 L257.07,324.69 L259.2,325.34 L261.34,324.44 L263.47,324.23 L265.6,324.45 L267.73,325.59 L269.86,327.58 L272,325.31 L274.13,325.71 L276.26,323.58 L278.39,323.6 L280.52,324.67 L282.66,323.1 L284.79,325.41 L286.92,325.61 L289.05,326.36 L291.18,327.61 L293.32,328.28 L295.45,328.36 L297.58,328.69 L299.71,324.78 L301.85,327.14 L303.98,325.83 L306.11,324.48 L308.24,326.38 L310.37,326.91 L312.51,326.77 L314.64,326.48 L316.77,325.84 L318.9,325.75 L321.03,325.7 L323.17,325.45 L325.3,328.22 L327.43,325.17 L329.56,326.04 L331.69,328.18 L333.83,326.05 L335.96,327.59 L338.09,328.2 L340.22,326.83 L342.36,323.59 L344.49,323.69 L346.62,325.42 L348.75,326.55 L350.88,326.05 L353.02,325.94 L355.15,324.04 L357.28,325.33 L359.41,326.48 L361.54,326.73 L363.68,327.19 L365.81,324.89 L367.94,326.05 L370.07,327.03 L372.21,326.98 L374.34,329.4 L376.47,327.51 L378.6,327.54 L380.73,326.88 L382.87,325.96 L385,326.05 L387.13,327.8 L389.26,326.77 L391.39,325.18 L393.53,328.26 L395.66,325.5 L397.79,325.82 L399.92,324.23 L402.05,324.18 L404.19,326.25 L406.32,327.59 L408.45,325.65 L410.58,324.29 L412.72,326.1 L414.85,325.69 L416.98,326.44 L419.11,324.61 L421.24,327.18 L423.38,324.89 L425.51,326 L427.64,326.38 L429.77,325.08 L431.9,326.07 L434.04,326.25 L436.17,326.33 L438.3,325.39 L440.43,325.21 L442.56,326.74 L444.7,324.66 L446.83,325.3 L448.96,326.77 L451.09,327 L453.23,327.63 L455.36,327.04 L457.49,327.41 L459.62,326.36 L461.75,327.43 L463.89,328.34 L466.02,325.1 L468.15,326.15 L470.28,325.95 L472.41,324.87 L474.55,327.62 L476.68,325.12 L478.81,324.88 L480.94,322.99 L483.07,325.25 L485.21,325.86 L487.34,327.3 L489.47,324.43 L491.6,324.65 L493.74,326.23 L495.87,324.58 L498,326.63 L500.13,326.78 L502.26,327.94 L504.4,325.7 L506.53,326.48 L508.66,323.84 L510.79,326.45 L512.92,325.94 L515.06,326.43 L517.19,327.14 L519.32,327.14 L521.45,326.16 L523.58,325.25 L525.72,323.83 L527.85,324.64 L529.98,322.01 L532.11,323.7 L534.25,324.94 L536.38,326 L538.51,327.88 L540.64,331.24 L542.77,334 L544.91,335.61 L547.04,333.64 L549.17,332.67 L551.3,334.86 L553.43,333.57 L555.57,330.2 L557.7,326.37 L559.83,320.58 L561.96,320.88 L564.09,318.68 L566.23,316.51 L568.36,318.06 L570.49,319.61 L572.62,318.67 L574.76,317.32 L576.89,318.54 L579.02,320.78 L581.15,323.42 L583.28,326.14 L585.42,323.54 L587.55,320.45 L589.68,321.32 L591.81,321.68 L593.94,320.53 L596.08,323.86 L598.21,327.56 L600.34,327.42 L602.47,328.87 L604.6,326.57 L606.74,328.92 L608.87,327.86 L611,328.16 L613.13,328.49 L615.27,326.7 L617.4,325.33 L619.53,324.95 L621.66,325.68 L623.79,326.95 L625.93,325.16 L628.06,326.86 L630.19,326.93 L632.32,327.94 L634.45,326.96 L636.59,327.02 L638.72,326 L640.85,325.95 L642.98,325.24 L645.11,325.27 L647.25,325.98 L649.38,328.26 L651.51,326.81 L653.64,326.96 L655.78,323.74 L657.91,325.2 L660.04,325.73 L662.17,326.18 L664.3,327.09 L666.44,324.65 L668.57,325.89 L670.7,325.02 L670.7,347.29 L668.57,347.39 L666.44,347.51 L664.3,348.82 L662.17,347.44 L660.04,347.81 L657.91,347.36 L655.78,346.91 L653.64,347.67 L651.51,349.01 L649.38,348.99 L647.25,347.63 L645.11,347.62 L642.98,347.54 L640.85,348.57 L638.72,347.58 L636.59,348.35 L634.45,348.17 L632.32,349.27 L630.19,348.73 L628.06,348.49 L625.93,347.96 L623.79,348.6 L621.66,347.39 L619.53,347.63 L617.4,347.46 L615.27,348.5 L613.13,348.94 L611,348.91 L608.87,348.32 L606.74,349.09 L604.6,348.22 L602.47,348.95 L600.34,347.91 L598.21,348.9 L596.08,347.31 L593.94,345.46 L591.81,346.11 L589.68,345.85 L587.55,345.07 L585.42,345.9 L583.28,347.5 L581.15,346.21 L579.02,344.58 L576.89,344.6 L574.76,343.49 L572.62,344.58 L570.49,344.27 L568.36,344.25 L566.23,343.26 L564.09,344.67 L561.96,345.27 L559.83,345.01 L557.7,347.61 L555.57,350.53 L553.43,352.63 L551.3,353.1 L549.17,351.78 L547.04,351.48 L544.91,352.93 L542.77,352.05 L540.64,350.92 L538.51,349.35 L536.38,347.84 L534.25,347.4 L532.11,346.82 L529.98,346.43 L527.85,346.87 L525.72,347.33 L523.58,347.63 L521.45,348.19 L519.32,348.68 L517.19,348.95 L515.06,348.03 L512.92,348.23 L510.79,348.72 L508.66,346.99 L506.53,347.95 L504.4,348.52 L502.26,349.05 L500.13,348.21 L498,348.51 L495.87,347.39 L493.74,347.79 L491.6,346.85 L489.47,347.93 L487.34,348.74 L485.21,348.35 L483.07,348.48 L480.94,346.56 L478.81,346.98 L476.68,347.12 L474.55,348.28 L472.41,348.2 L470.28,347.3 L468.15,348.37 L466.02,347.48 L463.89,349.04 L461.75,348.64 L459.62,348.01 L457.49,348.65 L455.36,348.66 L453.23,348.43 L451.09,348.31 L448.96,348.96 L446.83,348.09 L444.7,347.86 L442.56,348.43 L440.43,347.02 L438.3,347.6 L436.17,347.72 L434.04,348.04 L431.9,347.7 L429.77,348.15 L427.64,348 L425.51,347.94 L423.38,347.63 L421.24,347.91 L419.11,347.49 L416.98,348.53 L414.85,348.46 L412.72,347.67 L410.58,346.89 L408.45,347.68 L406.32,348.74 L404.19,348.76 L402.05,347.54 L399.92,346.82 L397.79,347.7 L395.66,347.1 L393.53,348.81 L391.39,348.01 L389.26,348.78 L387.13,348.71 L385,348.5 L382.87,347.36 L380.73,348.4 L378.6,348.95 L376.47,348.45 L374.34,349.18 L372.21,348.96 L370.07,348.37 L367.94,348.15 L365.81,347.69 L363.68,348.2 L361.54,348.26 L359.41,347.82 L357.28,348.04 L355.15,346.92 L353.02,347.53 L350.88,347.87 L348.75,348.37 L346.62,348.11 L344.49,346.95 L342.36,346.69 L340.22,348.01 L338.09,348.87 L335.96,348.87 L333.83,348.05 L331.69,348.5 L329.56,347.64 L327.43,347.54 L325.3,349.13 L323.17,348.04 L321.03,348.11 L318.9,347.46 L316.77,348 L314.64,347.75 L312.51,347.81 L310.37,348.13 L308.24,347.86 L306.11,347.14 L303.98,347.46 L301.85,348.37 L299.71,347.48 L297.58,349.57 L295.45,349.37 L293.32,349.5 L291.18,348.16 L289.05,347.46 L286.92,347.45 L284.79,347.97 L282.66,346.55 L280.52,347.62 L278.39,347.66 L276.26,346.72 L274.13,347.76 L272,348.02 L269.86,348.66 L267.73,348.11 L265.6,346.75 L263.47,346.9 L261.34,347.69 L259.2,347.83 L257.07,347.11 L254.94,348.96 L252.81,346.99 L250.67,348 L248.54,348.43 L246.41,348.16 L244.28,348.54 L242.15,347.95 L240.01,347.44 L237.88,347.73 L235.75,347.45 L233.62,348.54 L231.49,347.86 L229.35,347.79 L227.22,349.41 L225.09,349.25 L222.96,348.57 L220.83,348.27 L218.69,348.38 L216.56,348.42 L214.43,348.19 L212.3,348.98 L210.16,348.98 L208.03,349.2 L205.9,348.77 L203.77,347.66 L201.64,349.02 L199.5,348.87 L197.37,348.66 L195.24,347.22 L193.11,347.17 L190.98,348.15 L188.84,347.92 L186.71,347.73 L184.58,347.77 L182.45,347.89 L180.32,348.77 L178.18,348.24 L176.05,348.76 L173.92,348.88 L171.79,347.85 L169.65,348.3 L167.52,346.84 L165.39,348.07 L163.26,348.14 L161.13,348.61 L158.99,348.29 L156.86,348.97 L154.73,348.05 L152.6,349.18 L150.47,349.09 L148.33,349.32 L146.2,348.49 L144.07,347.16 L141.94,347.21 L139.81,347.76 L137.67,347.54 L135.54,347.47 L133.41,347.22 L131.28,348.44 L129.14,348.21 L127.01,347.57 L124.88,346.86 L122.75,348.36 L120.62,348.35 L118.48,347.81 L116.35,347.71 L116,347.43 L114.22,347.64 L112.09,348.56 L109.96,348.47 L107.82,349.14 L105.69,348.99 L103.56,349.3 L101.43,349.1 L99.3,348.4 L97.16,348.5 L95.03,348.87 L92.9,348.94 L90.77,347.84 L88.63,348.57 L86.5,349.25 L84.37,349.62 L82.24,349.42 L80.11,348.69 L77.97,348.15 L75.84,348.89 L73.71,347.82 L71.58,349.16 L69.45,347.91 L67.31,347.54 L65.18,347.63 L63.05,347.93 L60.92,347.58 L58.79,347.09 L56.65,348.08 L54.52,347.64 L52.39,348.74 L50.26,348.06 L48.12,348.13 L45.99,347.14 L43.86,348.15 L41.73,347.75 L39.6,347.59 L37.46,348.96 L35.33,349.13 L33.2,347.62 Z" fill="#416a94"/>
<path d="M33.2,326.01 L35.33,327 L37.46,328.56 L39.6,326.09 L41.73,325.31 L43.86,326.33 L45.99,325.62 L48.12,326.39 L50.26,325.58 L52.39,326.96 L54.52,325.46 L56.65,327.34 L58.79,325.3 L60.92,324.98 L63.05,325.28 L65.18,326.63 L67.31,324.72 L69.45,325.33 L71.58,328.73 L73.71,325.41 L75.84,328.31 L77.97,326.95 L80.11,327.74 L82.24,328.58 L84.37,329.38 L86.5,328.54 L88.63,327.38 L90.77,326.16 L92.9,327.05 L95.03,327.24 L97.16,327.32 L99.3,328.07 L101.43,328.03 L103.56,328.44 L105.69,329.02 L107.82,327.07 L109.96,326.09 L112.09,327.29 L114.22,324.05 L116,318.96 L116.35,321.51 L118.48,324.94 L120.62,326.43 L122.75,327.2 L124.88,324.42 L127.01,325.38 L129.14,327.08 L131.28,325.78 L133.41,325.09 L135.54,324.62 L137.67,324.19 L139.81,324.94 L141.94,325.46 L144.07,324.88 L146.2,326.84 L148.33,327.15 L150.47,328.94 L152.6,327.77 L154.73,325.41 L156.86,327.12 L158.99,326.56 L161.13,328.51 L163.26,325.31 L165.39,325.59 L167.52,323.3 L169.65,325.43 L171.79,326.99 L173.92,326.86 L176.05,326.27 L178.18,327.98 L180.32,327.66 L182.45,326.08 L184.58,326.17 L186.71,323.92 L188.84,325.74 L190.98,325.5 L193.11,325.18 L195.24,325.08 L197.37,325.92 L199.5,328.4 L201.64,328.26 L203.77,326.13 L205.9,327.44 L208.03,328.85 L210.16,328.04 L212.3,328.74 L214.43,326.27 L216.56,327.32 L218.69,326.47 L220.83,328.28 L222.96,327.53 L225.09,329.32 L227.22,328.54 L229.35,326.08 L231.49,326.46 L233.62,325.51 L235.75,324.93 L237.88,324.97 L240.01,323.65 L242.15,326.38 L244.28,325.53 L246.41,325.12 L248.54,326.76 L250.67,325.06 L252.81,325.08 L254.94,326.42 L257.07,324.69 L259.2,325.34 L261.34,324.44 L263.47,324.23 L265.6,324.45 L267.73,325.59 L269.86,327.58 L272,325.31 L274.13,325.71 L276.26,323.58 L278.39,323.6 L280.52,324.67 L282.66,323.1 L284.79,325.41 L286.92,325.61 L289.05,326.36 L291.18,327.61 L293.32,328.28 L295.45,328.36 L297.58,328.69 L299.71,324.78 L301.85,327.14 L303.98,325.83 L306.11,324.48 L308.24,326.38 L310.37,326.91 L312.51,326.77 L314.64,326.48 L316.77,325.84 L318.9,325.75 L321.03,325.7 L323.17,325.45 L325.3,328.22 L327.43,325.17 L329.56,326.04 L331.69,328.18 L333.83,326.05 L335.96,327.59 L338.09,328.2 L340.22,326.83 L342.36,323.59 L344.49,323.69 L346.62,325.42 L348.75,326.55 L350.88,326.05 L353.02,325.94 L355.15,324.04 L357.28,325.33 L359.41,326.48 L361.54,326.73 L363.68,327.19 L365.81,324.89 L367.94,326.05 L370.07,327.03 L372.21,326.98 L374.34,329.4 L376.47,327.51 L378.6,327.54 L380.73,326.88 L382.87,325.96 L385,326.05 L387.13,327.8 L389.26,326.77 L391.39,325.18 L393.53,328.26 L395.66,325.5 L397.79,325.82 L399.92,324.23 L402.05,324.18 L404.19,326.25 L406.32,327.59 L408.45,325.65 L410.58,324.29 L412.72,326.1 L414.85,325.69 L416.98,326.44 L419.11,324.61 L421.24,327.18 L423.38,324.89 L425.51,326 L427.64,326.38 L429.77,325.08 L431.9,326.07 L434.04,326.25 L436.17,326.33 L438.3,325.39 L440.43,325.21 L442.56,326.74 L444.7,324.66 L446.83,325.3 L448.96,326.77 L451.09,327 L453.23,327.63 L455.36,327.04 L457.49,327.41 L459.62,326.36 L461.75,327.43 L463.89,328.34 L466.02,325.1 L468.15,326.15 L470.28,325.95 L472.41,324.87 L474.55,327.62 L476.68,325.12 L478.81,324.88 L480.94,322.99 L483.07,325.25 L485.21,325.86 L487.34,327.3 L489.47,324.43 L491.6,324.65 L493.74,326.23 L495.87,324.58 L498,326.63 L500.13,326.78 L502.26,327.94 L504.4,325.7 L506.53,326.48 L508.66,323.84 L510.79,326.45 L512.92,325.94 L515.06,326.43 L517.19,327.14 L519.32,327.14 L521.45,326.16 L523.58,325.25 L525.72,323.83 L527.85,324.64 L529.98,322.01 L532.11,323.7 L534.25,324.94 L536.38,326 L538.51,327.88 L540.64,331.24 L542.77,334 L544.91,335.61 L547.04,333.64 L549.17,332.67 L551.3,334.86 L553.43,333.57 L555.57,330.2 L557.7,326.37 L559.83,320.58 L561.96,320.88 L564.09,318.68 L566.23,316.51 L568.36,318.06 L570.49,319.61 L572.62,318.67 L574.76,317.32 L576.89,318.54 L579.02,320.78 L581.15,323.42 L583.28,326.14 L585.42,323.54 L587.55,320.45 L589.68,321.32 L591.81,321.68 L593.94,320.53 L596.08,323.86 L598.21,327.56 L600.34,327.42 L602.47,328.87 L604.6,326.57 L606.74,328.92 L608.87,327.86 L611,328.16 L613.13,328.49 L615.27,326.7 L617.4,325.33 L619.53,324.95 L621.66,325.68 L623.79,326.95 L625.93,325.16 L628.06,326.86 L630.19,326.93 L632.32,327.94 L634.45,326.96 L636.59,327.02 L638.72,326 L640.85,325.95 L642.98,325.24 L645.11,325.27 L647.25,325.98 L649.38,328.26 L651.51,326.81 L653.64,326.96 L655.78,323.74 L657.91,325.2 L660.04,325.73 L662.17,326.18 L664.3,327.09 L666.44,324.65 L668.57,325.89 L670.7,325.02" fill="none" stroke="#6d93bd" stroke-width="1"/>
<path d="M33.2,304.08 L35.33,305.18 L37.46,308.66 L39.6,304.78 L41.73,304.34 L43.86,304.84 L45.99,304.36 L48.12,303.42 L50.26,303.75 L52.39,306.25 L54.52,302.96 L56.65,306.18 L58.79,304.25 L60.92,302.93 L63.05,304.81 L65.18,304.38 L67.31,301.97 L69.45,303.02 L71.58,307.41 L73.71,304.43 L75.84,307.53 L77.97,306.58 L80.11,306.39 L82.24,309.33 L84.37,308.22 L86.5,309.11 L88.63,307.42 L90.77,305.25 L92.9,304.96 L95.03,305.89 L97.16,306.66 L99.3,306.24 L101.43,308.21 L103.56,308.03 L105.69,308.79 L107.82,305.37 L109.96,304.11 L112.09,305.97 L114.22,301.31 L116,293.02 L116.35,297.27 L118.48,301.29 L120.62,304.37 L122.75,304.99 L124.88,302.98 L127.01,303.73 L129.14,304.72 L131.28,303.6 L133.41,303.3 L135.54,302.73 L137.67,300.94 L139.81,303.12 L141.94,303.84 L144.07,303.45 L146.2,304.85 L148.33,305.53 L150.47,309.18 L152.6,308.28 L154.73,304.78 L156.86,306.55 L158.99,305.83 L161.13,308.9 L163.26,304.27 L165.39,304.18 L167.52,300.02 L169.65,303.3 L171.79,306.71 L173.92,304.78 L176.05,305.98 L178.18,307.44 L180.32,305.52 L182.45,304.52 L184.58,303.71 L186.71,301.48 L188.84,304.15 L190.98,303.59 L193.11,303.71 L195.24,303.99 L197.37,304.71 L199.5,308.75 L201.64,307.61 L203.77,304.34 L205.9,305.67 L208.03,307.88 L210.16,306.51 L212.3,308.25 L214.43,306.48 L216.56,306.74 L218.69,306 L220.83,307.42 L222.96,306.55 L225.09,309.12 L227.22,307.95 L229.35,304.47 L231.49,305.31 L233.62,304.27 L235.75,302.41 L237.88,301.89 L240.01,300.42 L242.15,303.9 L244.28,303.15 L246.41,302.32 L248.54,304.93 L250.67,303.25 L252.81,303.47 L254.94,305.01 L257.07,303.73 L259.2,303.11 L261.34,301.49 L263.47,301.33 L265.6,301.54 L267.73,304.53 L269.86,306.09 L272,303.76 L274.13,303.25 L276.26,301.32 L278.39,300.54 L280.52,301.31 L282.66,301.1 L284.79,302.47 L286.92,302.46 L289.05,304.89 L291.18,306.72 L293.32,306.61 L295.45,308.63 L297.58,308.13 L299.71,304.07 L301.85,304.86 L303.98,302.98 L306.11,302.47 L308.24,305.17 L310.37,304.83 L312.51,305.69 L314.64,304.27 L316.77,303.72 L318.9,303.53 L321.03,303.1 L323.17,303.38 L325.3,307.28 L327.43,302.42 L329.56,305.42 L331.69,307.04 L333.83,305.6 L335.96,305.55 L338.09,308.03 L340.22,304.07 L342.36,301.49 L344.49,302.6 L346.62,304.22 L348.75,305.14 L350.88,305.23 L353.02,303.88 L355.15,302.03 L357.28,302.69 L359.41,305.54 L361.54,306.43 L363.68,307.07 L365.81,302.84 L367.94,303.82 L370.07,305.47 L372.21,306.87 L374.34,308.33 L376.47,307.26 L378.6,306.97 L380.73,306.02 L382.87,303.38 L385,303.86 L387.13,305.93 L389.26,305.31 L391.39,303.53 L393.53,307.95 L395.66,302.6 L397.79,304.89 L399.92,301.73 L402.05,300.78 L404.19,304.06 L406.32,306.21 L408.45,304.07 L410.58,301.53 L412.72,304.8 L414.85,303.37 L416.98,305.66 L419.11,301.77 L421.24,306.31 L423.38,303.55 L425.51,305.52 L427.64,305.24 L429.77,303.62 L431.9,305.85 L434.04,303.76 L436.17,304.97 L438.3,303.58 L440.43,303.24 L442.56,305.13 L444.7,302.52 L446.83,302.98 L448.96,305.34 L451.09,306.84 L453.23,305.73 L455.36,305.11 L457.49,307.42 L459.62,304.95 L461.75,305.71 L463.89,306.87 L466.02,304.22 L468.15,304.55 L470.28,304.08 L472.41,303.82 L474.55,307.42 L476.68,301.95 L478.81,302.24 L480.94,300.88 L483.07,304.24 L485.21,305.09 L487.34,306.48 L489.47,301.48 L491.6,302.81 L493.74,305.29 L495.87,302.09 L498,304.74 L500.13,306.89 L502.26,306.66 L504.4,304.03 L506.53,304.69 L508.66,301.4 L510.79,304.08 L512.92,304.14 L515.06,304.3 L517.19,306.88 L519.32,305.68 L521.45,304.04 L523.58,302.11 L525.72,301.14 L527.85,301.08 L529.98,298.78 L532.11,300.81 L534.25,302.54 L536.38,304.48 L538.51,307.5 L540.64,312.24 L542.77,315.1 L544.91,317.79 L547.04,314.62 L549.17,313.82 L551.3,316.66 L553.43,313.88 L555.57,311.6 L557.7,303.89 L559.83,297.24 L561.96,296.99 L564.09,293.93 L566.23,290.58 L568.36,293.9 L570.49,295.13 L572.62,293.41 L574.76,293.92 L576.89,294.05 L579.02,296.77 L581.15,301.85 L583.28,304.28 L585.42,300.38 L587.55,296.28 L589.68,298.6 L591.81,297.1 L593.94,296.84 L596.08,301.21 L598.21,305.25 L600.34,307.52 L602.47,307.82 L604.6,305.56 L606.74,308.88 L608.87,306.57 L611,307.93 L613.13,307.47 L615.27,304.71 L617.4,302.49 L619.53,303.77 L621.66,304.22 L623.79,305.47 L625.93,303.6 L628.06,304.87 L630.19,306.72 L632.32,306.51 L634.45,305.35 L636.59,305.88 L638.72,305.19 L640.85,304.27 L642.98,301.92 L645.11,303.4 L647.25,304.13 L649.38,307.69 L651.51,306.17 L653.64,306.23 L655.78,301.43 L657.91,302.4 L660.04,302.34 L662.17,305.71 L664.3,305.79 L666.44,302.31 L668.57,303.61 L670.7,304.13 L670.7,325.02 L668.57,325.89 L666.44,324.65 L664.3,327.09 L662.17,326.18 L660.04,325.73 L657.91,325.2 L655.78,323.74 L653.64,326.96 L651.51,326.81 L649.38,328.26 L647.25,325.98 L645.11,325.27 L642.98,325.24 L640.85,325.95 L638.72,326 L636.59,327.02 L634.45,326.96 L632.32,327.94 L630.19,326.93 L628.06,326.86 L625.93,325.16 L623.79,326.95 L621.66,325.68 L619.53,324.95 L617.4,325.33 L615.27,326.7 L613.13,328.49 L611,328.16 L608.87,327.86 L606.74,328.92 L604.6,326.57 L602.47,328.87 L600.34,327.42 L598.21,327.56 L596.08,323.86 L593.94,320.53 L591.81,321.68 L589.68,321.32 L587.55,320.45 L585.42,323.54 L583.28,326.14 L581.15,323.42 L579.02,320.78 L576.89,318.54 L574.76,317.32 L572.62,318.67 L570.49,319.61 L568.36,318.06 L566.23,316.51 L564.09,318.68 L561.96,320.88 L559.83,320.58 L557.7,326.37 L555.57,330.2 L553.43,333.57 L551.3,334.86 L549.17,332.67 L547.04,333.64 L544.91,335.61 L542.77,334 L540.64,331.24 L538.51,327.88 L536.38,326 L534.25,324.94 L532.11,323.7 L529.98,322.01 L527.85,324.64 L525.72,323.83 L523.58,325.25 L521.45,326.16 L519.32,327.14 L517.19,327.14 L515.06,326.43 L512.92,325.94 L510.79,326.45 L508.66,323.84 L506.53,326.48 L504.4,325.7 L502.26,327.94 L500.13,326.78 L498,326.63 L495.87,324.58 L493.74,326.23 L491.6,324.65 L489.47,324.43 L487.34,327.3 L485.21,325.86 L483.07,325.25 L480.94,322.99 L478.81,324.88 L476.68,325.12 L474.55,327.62 L472.41,324.87 L470.28,325.95 L468.15,326.15 L466.02,325.1 L463.89,328.34 L461.75,327.43 L459.62,326.36 L457.49,327.41 L455.36,327.04 L453.23,327.63 L451.09,327 L448.96,326.77 L446.83,325.3 L444.7,324.66 L442.56,326.74 L440.43,325.21 L438.3,325.39 L436.17,326.33 L434.04,326.25 L431.9,326.07 L429.77,325.08 L427.64,326.38 L425.51,326 L423.38,324.89 L421.24,327.18 L419.11,324.61 L416.98,326.44 L414.85,325.69 L412.72,326.1 L410.58,324.29 L408.45,325.65 L406.32,327.59 L404.19,326.25 L402.05,324.18 L399.92,324.23 L397.79,325.82 L395.66,325.5 L393.53,328.26 L391.39,325.18 L389.26,326.77 L387.13,327.8 L385,326.05 L382.87,325.96 L380.73,326.88 L378.6,327.54 L376.47,327.51 L374.34,329.4 L372.21,326.98 L370.07,327.03 L367.94,326.05 L365.81,324.89 L363.68,327.19 L361.54,326.73 L359.41,326.48 L357.28,325.33 L355.15,324.04 L353.02,325.94 L350.88,326.05 L348.75,326.55 L346.62,325.42 L344.49,323.69 L342.36,323.59 L340.22,326.83 L338.09,328.2 L335.96,327.59 L333.83,326.05 L331.69,328.18 L329.56,326.04 L327.43,325.17 L325.3,328.22 L323.17,325.45 L321.03,325.7 L318.9,325.75 L316.77,325.84 L314.64,326.48 L312.51,326.77 L310.37,326.91 L308.24,326.38 L306.11,324.48 L303.98,325.83 L301.85,327.14 L299.71,324.78 L297.58,328.69 L295.45,328.36 L293.32,328.28 L291.18,327.61 L289.05,326.36 L286.92,325.61 L284.79,325.41 L282.66,323.1 L280.52,324.67 L278.39,323.6 L276.26,323.58 L274.13,325.71 L272,325.31 L269.86,327.58 L267.73,325.59 L265.6,324.45 L263.47,324.23 L261.34,324.44 L259.2,325.34 L257.07,324.69 L254.94,326.42 L252.81,325.08 L250.67,325.06 L248.54,326.76 L246.41,325.12 L244.28,325.53 L242.15,326.38 L240.01,323.65 L237.88,324.97 L235.75,324.93 L233.62,325.51 L231.49,326.46 L229.35,326.08 L227.22,328.54 L225.09,329.32 L222.96,327.53 L220.83,328.28 L218.69,326.47 L216.56,327.32 L214.43,326.27 L212.3,328.74 L210.16,328.04 L208.03,328.85 L205.9,327.44 L203.77,326.13 L201.64,328.26 L199.5,328.4 L197.37,325.92 L195.24,325.08 L193.11,325.18 L190.98,325.5 L188.84,325.74 L186.71,323.92 L184.58,326.17 L182.45,326.08 L180.32,327.66 L178.18,327.98 L176.05,326.27 L173.92,326.86 L171.79,326.99 L169.65,325.43 L167.52,323.3 L165.39,325.59 L163.26,325.31 L161.13,328.51 L158.99,326.56 L156.86,327.12 L154.73,325.41 L152.6,327.77 L150.47,328.94 L148.33,327.15 L146.2,326.84 L144.07,324.88 L141.94,325.46 L139.81,324.94 L137.67,324.19 L135.54,324.62 L133.41,325.09 L131.28,325.78 L129.14,327.08 L127.01,325.38 L124.88,324.42 L122.75,327.2 L120.62,326.43 L118.48,324.94 L116.35,321.51 L116,318.96 L114.22,324.05 L112.09,327.29 L109.96,326.09 L107.82,327.07 L105.69,329.02 L103.56,328.44 L101.43,328.03 L99.3,328.07 L97.16,327.32 L95.03,327.24 L92.9,327.05 L90.77,326.16 L88.63,327.38 L86.5,328.54 L84.37,329.38 L82.24,328.58 L80.11,327.74 L77.97,326.95 L75.84,328.31 L73.71,325.41 L71.58,328.73 L69.45,325.33 L67.31,324.72 L65.18,326.63 L63.05,325.28 L60.92,324.98 L58.79,325.3 L56.65,327.34 L54.52,325.46 L52.39,326.96 L50.26,325.58 L48.12,326.39 L45.99,325.62 L43.86,326.33 L41.73,325.31 L39.6,326.09 L37.46,328.56 L35.33,327 L33.2,326.01 Z" fill="#25588b"/>
<path d="M33.2,304.08 L35.33,305.18 L37.46,308.66 L39.6,304.78 L41.73,304.34 L43.86,304.84 L45.99,304.36 L48.12,303.42 L50.26,303.75 L52.39,306.25 L54.52,302.96 L56.65,306.18 L58.79,304.25 L60.92,302.93 L63.05,304.81 L65.18,304.38 L67.31,301.97 L69.45,303.02 L71.58,307.41 L73.71,304.43 L75.84,307.53 L77.97,306.58 L80.11,306.39 L82.24,309.33 L84.37,308.22 L86.5,309.11 L88.63,307.42 L90.77,305.25 L92.9,304.96 L95.03,305.89 L97.16,306.66 L99.3,306.24 L101.43,308.21 L103.56,308.03 L105.69,308.79 L107.82,305.37 L109.96,304.11 L112.09,305.97 L114.22,301.31 L116,293.02 L116.35,297.27 L118.48,301.29 L120.62,304.37 L122.75,304.99 L124.88,302.98 L127.01,303.73 L129.14,304.72 L131.28,303.6 L133.41,303.3 L135.54,302.73 L137.67,300.94 L139.81,303.12 L141.94,303.84 L144.07,303.45 L146.2,304.85 L148.33,305.53 L150.47,309.18 L152.6,308.28 L154.73,304.78 L156.86,306.55 L158.99,305.83 L161.13,308.9 L163.26,304.27 L165.39,304.18 L167.52,300.02 L169.65,303.3 L171.79,306.71 L173.92,304.78 L176.05,305.98 L178.18,307.44 L180.32,305.52 L182.45,304.52 L184.58,303.71 L186.71,301.48 L188.84,304.15 L190.98,303.59 L193.11,303.71 L195.24,303.99 L197.37,304.71 L199.5,308.75 L201.64,307.61 L203.77,304.34 L205.9,305.67 L208.03,307.88 L210.16,306.51 L212.3,308.25 L214.43,306.48 L216.56,306.74 L218.69,306 L220.83,307.42 L222.96,306.55 L225.09,309.12 L227.22,307.95 L229.35,304.47 L231.49,305.31 L233.62,304.27 L235.75,302.41 L237.88,301.89 L240.01,300.42 L242.15,303.9 L244.28,303.15 L246.41,302.32 L248.54,304.93 L250.67,303.25 L252.81,303.47 L254.94,305.01 L257.07,303.73 L259.2,303.11 L261.34,301.49 L263.47,301.33 L265.6,301.54 L267.73,304.53 L269.86,306.09 L272,303.76 L274.13,303.25 L276.26,301.32 L278.39,300.54 L280.52,301.31 L282.66,301.1 L284.79,302.47 L286.92,302.46 L289.05,304.89 L291.18,306.72 L293.32,306.61 L295.45,308.63 L297.58,308.13 L299.71,304.07 L301.85,304.86 L303.98,302.98 L306.11,302.47 L308.24,305.17 L310.37,304.83 L312.51,305.69 L314.64,304.27 L316.77,303.72 L318.9,303.53 L321.03,303.1 L323.17,303.38 L325.3,307.28 L327.43,302.42 L329.56,305.42 L331.69,307.04 L333.83,305.6 L335.96,305.55 L338.09,308.03 L340.22,304.07 L342.36,301.49 L344.49,302.6 L346.62,304.22 L348.75,305.14 L350.88,305.23 L353.02,303.88 L355.15,302.03 L357.28,302.69 L359.41,305.54 L361.54,306.43 L363.68,307.07 L365.81,302.84 L367.94,303.82 L370.07,305.47 L372.21,306.87 L374.34,308.33 L376.47,307.26 L378.6,306.97 L380.73,306.02 L382.87,303.38 L385,303.86 L387.13,305.93 L389.26,305.31 L391.39,303.53 L393.53,307.95 L395.66,302.6 L397.79,304.89 L399.92,301.73 L402.05,300.78 L404.19,304.06 L406.32,306.21 L408.45,304.07 L410.58,301.53 L412.72,304.8 L414.85,303.37 L416.98,305.66 L419.11,301.77 L421.24,306.31 L423.38,303.55 L425.51,305.52 L427.64,305.24 L429.77,303.62 L431.9,305.85 L434.04,303.76 L436.17,304.97 L438.3,303.58 L440.43,303.24 L442.56,305.13 L444.7,302.52 L446.83,302.98 L448.96,305.34 L451.09,306.84 L453.23,305.73 L455.36,305.11 L457.49,307.42 L459.62,304.95 L461.75,305.71 L463.89,306.87 L466.02,304.22 L468.15,304.55 L470.28,304.08 L472.41,303.82 L474.55,307.42 L476.68,301.95 L478.81,302.24 L480.94,300.88 L483.07,304.24 L485.21,305.09 L487.34,306.48 L489.47,301.48 L491.6,302.81 L493.74,305.29 L495.87,302.09 L498,304.74 L500.13,306.89 L502.26,306.66 L504.4,304.03 L506.53,304.69 L508.66,301.4 L510.79,304.08 L512.92,304.14 L515.06,304.3 L517.19,306.88 L519.32,305.68 L521.45,304.04 L523.58,302.11 L525.72,301.14 L527.85,301.08 L529.98,298.78 L532.11,300.81 L534.25,302.54 L536.38,304.48 L538.51,307.5 L540.64,312.24 L542.77,315.1 L544.91,317.79 L547.04,314.62 L549.17,313.82 L551.3,316.66 L553.43,313.88 L555.57,311.6 L557.7,303.89 L559.83,297.24 L561.96,296.99 L564.09,293.93 L566.23,290.58 L568.36,293.9 L570.49,295.13 L572.62,293.41 L574.76,293.92 L576.89,294.05 L579.02,296.77 L581.15,301.85 L583.28,304.28 L585.42,300.38 L587.55,296.28 L589.68,298.6 L591.81,297.1 L593.94,296.84 L596.08,301.21 L598.21,305.25 L600.34,307.52 L602.47,307.82 L604.6,305.56 L606.74,308.88 L608.87,306.57 L611,307.93 L613.13,307.47 L615.27,304.71 L617.4,302.49 L619.53,303.77 L621.66,304.22 L623.79,305.47 L625.93,303.6 L628.06,304.87 L630.19,306.72 L632.32,306.51 L634.45,305.35 L636.59,305.88 L638.72,305.19 L640.85,304.27 L642.98,301.92 L645.11,303.4 L647.25,304.13 L649.38,307.69 L651.51,306.17 L653.64,306.23 L655.78,301.43 L657.91,302.4 L660.04,302.34 L662.17,305.71 L664.3,305.79 L666.44,302.31 L668.57,303.61 L670.7,304.13" fill="none" stroke="#4d86c2" stroke-width="1"/>
<path d="M33.2,282.15 L35.33,284.9 L37.46,288.51 L39.6,281.94 L41.73,282.31 L43.86,283.33 L45.99,281.32 L48.12,279.92 L50.26,280.61 L52.39,284.17 L54.52,280.09 L56.65,284.1 L58.79,281.56 L60.92,280.26 L63.05,283.69 L65.18,281.91 L67.31,279.25 L69.45,280.24 L71.58,287.02 L73.71,283.52 L75.84,287.33 L77.97,284.91 L80.11,284.53 L82.24,288.45 L84.37,287.98 L86.5,287.44 L88.63,285.7 L90.77,283.2 L92.9,284 L95.03,284.62 L97.16,285.55 L99.3,285.37 L101.43,287.63 L103.56,286.83 L105.69,287.23 L107.82,285 L109.96,282.1 L112.09,285.79 L114.22,279.88 L116,267.82 L116.35,273.79 L118.48,277.39 L120.62,282.36 L122.75,284.13 L124.88,280.56 L127.01,281.23 L129.14,281.39 L131.28,279.87 L133.41,280.16 L135.54,280.49 L137.67,279.05 L139.81,279.79 L141.94,281.73 L144.07,281.98 L146.2,284.13 L148.33,285.6 L150.47,287.83 L152.6,288.68 L154.73,281.96 L156.86,286.25 L158.99,283.84 L161.13,289.17 L163.26,283.64 L165.39,280.99 L167.52,277.97 L169.65,280.63 L171.79,285.91 L173.92,284.53 L176.05,283.66 L178.18,285.72 L180.32,283.16 L182.45,282.67 L184.58,282.35 L186.71,278 L188.84,280.81 L190.98,281.65 L193.11,279.68 L195.24,282.39 L197.37,281.6 L199.5,287.12 L201.64,287.61 L203.77,284.05 L205.9,283.52 L208.03,285.72 L210.16,285.95 L212.3,287.82 L214.43,284.94 L216.56,286.95 L218.69,284.03 L220.83,286.84 L222.96,287.35 L225.09,288.79 L227.22,287 L229.35,283.19 L231.49,283.11 L233.62,282.86 L235.75,279.12 L237.88,279.5 L240.01,276.89 L242.15,281.04 L244.28,281.33 L246.41,279.68 L248.54,282.24 L250.67,279.69 L252.81,280.19 L254.94,283.31 L257.07,281.91 L259.2,281.28 L261.34,277.43 L263.47,277.84 L265.6,277.52 L267.73,282.89 L269.86,283.69 L272,280.42 L274.13,279.68 L276.26,278.05 L278.39,277.8 L280.52,278.57 L282.66,276.8 L284.79,279.65 L286.92,278.92 L289.05,282.45 L291.18,284.42 L293.32,284.88 L295.45,288.05 L297.58,288.62 L299.71,282.76 L301.85,282.97 L303.98,280.44 L306.11,279.21 L308.24,281.54 L310.37,283.62 L312.51,283.48 L314.64,281.27 L316.77,280.18 L318.9,280.95 L321.03,281.35 L323.17,279.95 L325.3,284.93 L327.43,279.75 L329.56,282.65 L331.69,286.37 L333.83,285.62 L335.96,283.53 L338.09,285.84 L340.22,282.72 L342.36,277.88 L344.49,278.89 L346.62,282.73 L348.75,282.77 L350.88,282.34 L353.02,281.2 L355.15,280.08 L357.28,280.6 L359.41,283.21 L361.54,284.47 L363.68,286.07 L365.81,281.97 L367.94,281.4 L370.07,282.83 L372.21,286.45 L374.34,287.43 L376.47,285.41 L378.6,284.34 L380.73,283.8 L382.87,280.99 L385,281.71 L387.13,284.72 L389.26,284.13 L391.39,282.4 L393.53,286.12 L395.66,280.62 L397.79,283.04 L399.92,279.27 L402.05,277.48 L404.19,283.06 L406.32,285.48 L408.45,280.24 L410.58,278.65 L412.72,283.15 L414.85,281.01 L416.98,283.41 L419.11,280.11 L421.24,284.22 L423.38,281.87 L425.51,284.05 L427.64,284.75 L429.77,282.13 L431.9,282.8 L434.04,280.34 L436.17,282.67 L438.3,280.47 L440.43,280.89 L442.56,282.29 L444.7,279.89 L446.83,279.33 L448.96,283.18 L451.09,285.21 L453.23,283.23 L455.36,284.23 L457.49,287.23 L459.62,284.72 L461.75,285.39 L463.89,286.76 L466.02,283.21 L468.15,283.18 L470.28,281.1 L472.41,281.27 L474.55,284.53 L476.68,278.25 L478.81,280.56 L480.94,277.38 L483.07,282.11 L485.21,284.03 L487.34,283.44 L489.47,279.25 L491.6,279.94 L493.74,282.73 L495.87,278.89 L498,282.67 L500.13,286.18 L502.26,286.1 L504.4,283.04 L506.53,281.93 L508.66,277.57 L510.79,282.89 L512.92,283.78 L515.06,283.15 L517.19,285.93 L519.32,283.24 L521.45,280.43 L523.58,278.05 L525.72,278.85 L527.85,277 L529.98,274.42 L532.11,276.24 L534.25,277.55 L536.38,282.82 L538.51,288.01 L540.64,291.85 L542.77,295.63 L544.91,299.58 L547.04,296.81 L549.17,295.36 L551.3,298.6 L553.43,296.76 L555.57,292.49 L557.7,282.24 L559.83,273.49 L561.96,271.81 L564.09,268.85 L566.23,264.47 L568.36,268.82 L570.49,268.43 L572.62,268.92 L574.76,267.45 L576.89,269.12 L579.02,272.78 L581.15,276.96 L583.28,282.64 L585.42,275.62 L587.55,271.07 L589.68,273.31 L591.81,273.47 L593.94,272.35 L596.08,278.84 L598.21,282.3 L600.34,285.29 L602.47,286.6 L604.6,284.61 L606.74,288.56 L608.87,284.94 L611,287.12 L613.13,285.66 L615.27,283.21 L617.4,280.47 L619.53,282.6 L621.66,281.61 L623.79,283.22 L625.93,282.64 L628.06,282.25 L630.19,286.29 L632.32,285.69 L634.45,283.93 L636.59,284.94 L638.72,282.56 L640.85,282.58 L642.98,280.01 L645.11,281.45 L647.25,283 L649.38,285.32 L651.51,285.72 L653.64,283.39 L655.78,279.96 L657.91,278.35 L660.04,278.57 L662.17,284.5 L664.3,284.7 L666.44,280.95 L668.57,281.54 L670.7,282.5 L670.7,304.13 L668.57,303.61 L666.44,302.31 L664.3,305.79 L662.17,305.71 L660.04,302.34 L657.91,302.4 L655.78,301.43 L653.64,306.23 L651.51,306.17 L649.38,307.69 L647.25,304.13 L645.11,303.4 L642.98,301.92 L640.85,304.27 L638.72,305.19 L636.59,305.88 L634.45,305.35 L632.32,306.51 L630.19,306.72 L628.06,304.87 L625.93,303.6 L623.79,305.47 L621.66,304.22 L619.53,303.77 L617.4,302.49 L615.27,304.71 L613.13,307.47 L611,307.93 L608.87,306.57 L606.74,308.88 L604.6,305.56 L602.47,307.82 L600.34,307.52 L598.21,305.25 L596.08,301.21 L593.94,296.84 L591.81,297.1 L589.68,298.6 L587.55,296.28 L585.42,300.38 L583.28,304.28 L581.15,301.85 L579.02,296.77 L576.89,294.05 L574.76,293.92 L572.62,293.41 L570.49,295.13 L568.36,293.9 L566.23,290.58 L564.09,293.93 L561.96,296.99 L559.83,297.24 L557.7,303.89 L555.57,311.6 L553.43,313.88 L551.3,316.66 L549.17,313.82 L547.04,314.62 L544.91,317.79 L542.77,315.1 L540.64,312.24 L538.51,307.5 L536.38,304.48 L534.25,302.54 L532.11,300.81 L529.98,298.78 L527.85,301.08 L525.72,301.14 L523.58,302.11 L521.45,304.04 L519.32,305.68 L517.19,306.88 L515.06,304.3 L512.92,304.14 L510.79,304.08 L508.66,301.4 L506.53,304.69 L504.4,304.03 L502.26,306.66 L500.13,306.89 L498,304.74 L495.87,302.09 L493.74,305.29 L491.6,302.81 L489.47,301.48 L487.34,306.48 L485.21,305.09 L483.07,304.24 L480.94,300.88 L478.81,302.24 L476.68,301.95 L474.55,307.42 L472.41,303.82 L470.28,304.08 L468.15,304.55 L466.02,304.22 L463.89,306.87 L461.75,305.71 L459.62,304.95 L457.49,307.42 L455.36,305.11 L453.23,305.73 L451.09,306.84 L448.96,305.34 L446.83,302.98 L444.7,302.52 L442.56,305.13 L440.43,303.24 L438.3,303.58 L436.17,304.97 L434.04,303.76 L431.9,305.85 L429.77,303.62 L427.64,305.24 L425.51,305.52 L423.38,303.55 L421.24,306.31 L419.11,301.77 L416.98,305.66 L414.85,303.37 L412.72,304.8 L410.58,301.53 L408.45,304.07 L406.32,306.21 L404.19,304.06 L402.05,300.78 L399.92,301.73 L397.79,304.89 L395.66,302.6 L393.53,307.95 L391.39,303.53 L389.26,305.31 L387.13,305.93 L385,303.86 L382.87,303.38 L380.73,306.02 L378.6,306.97 L376.47,307.26 L374.34,308.33 L372.21,306.87 L370.07,305.47 L367.94,303.82 L365.81,302.84 L363.68,307.07 L361.54,306.43 L359.41,305.54 L357.28,302.69 L355.15,302.03 L353.02,303.88 L350.88,305.23 L348.75,305.14 L346.62,304.22 L344.49,302.6 L342.36,301.49 L340.22,304.07 L338.09,308.03 L335.96,305.55 L333.83,305.6 L331.69,307.04 L329.56,305.42 L327.43,302.42 L325.3,307.28 L323.17,303.38 L321.03,303.1 L318.9,303.53 L316.77,303.72 L314.64,304.27 L312.51,305.69 L310.37,304.83 L308.24,305.17 L306.11,302.47 L303.98,302.98 L301.85,304.86 L299.71,304.07 L297.58,308.13 L295.45,308.63 L293.32,306.61 L291.18,306.72 L289.05,304.89 L286.92,302.46 L284.79,302.47 L282.66,301.1 L280.52,301.31 L278.39,300.54 L276.26,301.32 L274.13,303.25 L272,303.76 L269.86,306.09 L267.73,304.53 L265.6,301.54 L263.47,301.33 L261.34,301.49 L259.2,303.11 L257.07,303.73 L254.94,305.01 L252.81,303.47 L250.67,303.25 L248.54,304.93 L246.41,302.32 L244.28,303.15 L242.15,303.9 L240.01,300.42 L237.88,301.89 L235.75,302.41 L233.62,304.27 L231.49,305.31 L229.35,304.47 L227.22,307.95 L225.09,309.12 L222.96,306.55 L220.83,307.42 L218.69,306 L216.56,306.74 L214.43,306.48 L212.3,308.25 L210.16,306.51 L208.03,307.88 L205.9,305.67 L203.77,304.34 L201.64,307.61 L199.5,308.75 L197.37,304.71 L195.24,303.99 L193.11,303.71 L190.98,303.59 L188.84,304.15 L186.71,301.48 L184.58,303.71 L182.45,304.52 L180.32,305.52 L178.18,307.44 L176.05,305.98 L173.92,304.78 L171.79,306.71 L169.65,303.3 L167.52,300.02 L165.39,304.18 L163.26,304.27 L161.13,308.9 L158.99,305.83 L156.86,306.55 L154.73,304.78 L152.6,308.28 L150.47,309.18 L148.33,305.53 L146.2,304.85 L144.07,303.45 L141.94,303.84 L139.81,303.12 L137.67,300.94 L135.54,302.73 L133.41,303.3 L131.28,303.6 L129.14,304.72 L127.01,303.73 L124.88,302.98 L122.75,304.99 L120.62,304.37 L118.48,301.29 L116.35,297.27 L116,293.02 L114.22,301.31 L112.09,305.97 L109.96,304.11 L107.82,305.37 L105.69,308.79 L103.56,308.03 L101.43,308.21 L99.3,306.24 L97.16,306.66 L95.03,305.89 L92.9,304.96 L90.77,305.25 L88.63,307.42 L86.5,309.11 L84.37,308.22 L82.24,309.33 L80.11,306.39 L77.97,306.58 L75.84,307.53 L73.71,304.43 L71.58,307.41 L69.45,303.02 L67.31,301.97 L65.18,304.38 L63.05,304.81 L60.92,302.93 L58.79,304.25 L56.65,306.18 L54.52,302.96 L52.39,306.25 L50.26,303.75 L48.12,303.42 L45.99,304.36 L43.86,304.84 L41.73,304.34 L39.6,304.78 L37.46,308.66 L35.33,305.18 L33.2,304.08 Z" fill="#1a3c66"/>
<path d="M33.2,282.15 L35.33,284.9 L37.46,288.51 L39.6,281.94 L41.73,282.31 L43.86,283.33 L45.99,281.32 L48.12,279.92 L50.26,280.61 L52.39,284.17 L54.52,280.09 L56.65,284.1 L58.79,281.56 L60.92,280.26 L63.05,283.69 L65.18,281.91 L67.31,279.25 L69.45,280.24 L71.58,287.02 L73.71,283.52 L75.84,287.33 L77.97,284.91 L80.11,284.53 L82.24,288.45 L84.37,287.98 L86.5,287.44 L88.63,285.7 L90.77,283.2 L92.9,284 L95.03,284.62 L97.16,285.55 L99.3,285.37 L101.43,287.63 L103.56,286.83 L105.69,287.23 L107.82,285 L109.96,282.1 L112.09,285.79 L114.22,279.88 L116,267.82 L116.35,273.79 L118.48,277.39 L120.62,282.36 L122.75,284.13 L124.88,280.56 L127.01,281.23 L129.14,281.39 L131.28,279.87 L133.41,280.16 L135.54,280.49 L137.67,279.05 L139.81,279.79 L141.94,281.73 L144.07,281.98 L146.2,284.13 L148.33,285.6 L150.47,287.83 L152.6,288.68 L154.73,281.96 L156.86,286.25 L158.99,283.84 L161.13,289.17 L163.26,283.64 L165.39,280.99 L167.52,277.97 L169.65,280.63 L171.79,285.91 L173.92,284.53 L176.05,283.66 L178.18,285.72 L180.32,283.16 L182.45,282.67 L184.58,282.35 L186.71,278 L188.84,280.81 L190.98,281.65 L193.11,279.68 L195.24,282.39 L197.37,281.6 L199.5,287.12 L201.64,287.61 L203.77,284.05 L205.9,283.52 L208.03,285.72 L210.16,285.95 L212.3,287.82 L214.43,284.94 L216.56,286.95 L218.69,284.03 L220.83,286.84 L222.96,287.35 L225.09,288.79 L227.22,287 L229.35,283.19 L231.49,283.11 L233.62,282.86 L235.75,279.12 L237.88,279.5 L240.01,276.89 L242.15,281.04 L244.28,281.33 L246.41,279.68 L248.54,282.24 L250.67,279.69 L252.81,280.19 L254.94,283.31 L257.07,281.91 L259.2,281.28 L261.34,277.43 L263.47,277.84 L265.6,277.52 L267.73,282.89 L269.86,283.69 L272,280.42 L274.13,279.68 L276.26,278.05 L278.39,277.8 L280.52,278.57 L282.66,276.8 L284.79,279.65 L286.92,278.92 L289.05,282.45 L291.18,284.42 L293.32,284.88 L295.45,288.05 L297.58,288.62 L299.71,282.76 L301.85,282.97 L303.98,280.44 L306.11,279.21 L308.24,281.54 L310.37,283.62 L312.51,283.48 L314.64,281.27 L316.77,280.18 L318.9,280.95 L321.03,281.35 L323.17,279.95 L325.3,284.93 L327.43,279.75 L329.56,282.65 L331.69,286.37 L333.83,285.62 L335.96,283.53 L338.09,285.84 L340.22,282.72 L342.36,277.88 L344.49,278.89 L346.62,282.73 L348.75,282.77 L350.88,282.34 L353.02,281.2 L355.15,280.08 L357.28,280.6 L359.41,283.21 L361.54,284.47 L363.68,286.07 L365.81,281.97 L367.94,281.4 L370.07,282.83 L372.21,286.45 L374.34,287.43 L376.47,285.41 L378.6,284.34 L380.73,283.8 L382.87,280.99 L385,281.71 L387.13,284.72 L389.26,284.13 L391.39,282.4 L393.53,286.12 L395.66,280.62 L397.79,283.04 L399.92,279.27 L402.05,277.48 L404.19,283.06 L406.32,285.48 L408.45,280.24 L410.58,278.65 L412.72,283.15 L414.85,281.01 L416.98,283.41 L419.11,280.11 L421.24,284.22 L423.38,281.87 L425.51,284.05 L427.64,284.75 L429.77,282.13 L431.9,282.8 L434.04,280.34 L436.17,282.67 L438.3,280.47 L440.43,280.89 L442.56,282.29 L444.7,279.89 L446.83,279.33 L448.96,283.18 L451.09,285.21 L453.23,283.23 L455.36,284.23 L457.49,287.23 L459.62,284.72 L461.75,285.39 L463.89,286.76 L466.02,283.21 L468.15,283.18 L470.28,281.1 L472.41,281.27 L474.55,284.53 L476.68,278.25 L478.81,280.56 L480.94,277.38 L483.07,282.11 L485.21,284.03 L487.34,283.44 L489.47,279.25 L491.6,279.94 L493.74,282.73 L495.87,278.89 L498,282.67 L500.13,286.18 L502.26,286.1 L504.4,283.04 L506.53,281.93 L508.66,277.57 L510.79,282.89 L512.92,283.78 L515.06,283.15 L517.19,285.93 L519.32,283.24 L521.45,280.43 L523.58,278.05 L525.72,278.85 L527.85,277 L529.98,274.42 L532.11,276.24 L534.25,277.55 L536.38,282.82 L538.51,288.01 L540.64,291.85 L542.77,295.63 L544.91,299.58 L547.04,296.81 L549.17,295.36 L551.3,298.6 L553.43,296.76 L555.57,292.49 L557.7,282.24 L559.83,273.49 L561.96,271.81 L564.09,268.85 L566.23,264.47 L568.36,268.82 L570.49,268.43 L572.62,268.92 L574.76,267.45 L576.89,269.12 L579.02,272.78 L581.15,276.96 L583.28,282.64 L585.42,275.62 L587.55,271.07 L589.68,273.31 L591.81,273.47 L593.94,272.35 L596.08,278.84 L598.21,282.3 L600.34,285.29 L602.47,286.6 L604.6,284.61 L606.74,288.56 L608.87,284.94 L611,287.12 L613.13,285.66 L615.27,283.21 L617.4,280.47 L619.53,282.6 L621.66,281.61 L623.79,283.22 L625.93,282.64 L628.06,282.25 L630.19,286.29 L632.32,285.69 L634.45,283.93 L636.59,284.94 L638.72,282.56 L640.85,282.58 L642.98,280.01 L645.11,281.45 L647.25,283 L649.38,285.32 L651.51,285.72 L653.64,283.39 L655.78,279.96 L657.91,278.35 L660.04,278.57 L662.17,284.5 L664.3,284.7 L666.44,280.95 L668.57,281.54 L670.7,282.5" fill="none" stroke="#2e5688" stroke-width="1"/>
<rect x="21.5" y="394.4" width="8.5" height="2.6" rx="1.2" fill="#c7d0d6"/>
<text x="39.2" y="397.7" font-size="7.6" fill="#d0d1d5" text-anchor="start" font-weight="400" stroke="#d0d1d5" stroke-width="0.18">web_server_01</text>
<rect x="101.5" y="394.4" width="8.5" height="2.6" rx="1.2" fill="#6d93bd"/>
<text x="118.7" y="397.7" font-size="7.6" fill="#d0d1d5" text-anchor="start" font-weight="400" stroke="#d0d1d5" stroke-width="0.18">web_server_02</text>
<rect x="182.5" y="394.4" width="8.5" height="2.6" rx="1.2" fill="#4d86c2"/>
<text x="199.5" y="397.7" font-size="7.6" fill="#d0d1d5" text-anchor="start" font-weight="400" stroke="#d0d1d5" stroke-width="0.18">web_server_03</text>
<rect x="263" y="394.4" width="8.5" height="2.6" rx="1.2" fill="#2e5688"/>
<text x="280.7" y="397.7" font-size="7.6" fill="#d0d1d5" text-anchor="start" font-weight="400" stroke="#d0d1d5" stroke-width="0.18">web_server_04</text>
<text x="699.3" y="237.2" font-size="9.3" fill="#d8d9dd" text-anchor="start" font-weight="400" stroke="#d8d9dd" stroke-width="0.25" textLength="47.3" lengthAdjust="spacingAndGlyphs">Google hits</text>
<rect x="698.7" y="266" width="60.3" height="121.6" fill="#25262b"/>
<rect x="698.7" y="386.0" width="60.3" height="1.6" fill="#2c4a72"/>
<rect x="698.7" y="386.0" width="60.3" height="1.4" fill="#5794f2"/>
<text x="728.85" y="261.7" font-size="17" fill="#5794f2" text-anchor="middle" font-weight="400"  textLength="41.8" lengthAdjust="spacingAndGlyphs">0.400</text>
<text x="728.85" y="398.3" font-size="9.4" fill="#c3c4c8" text-anchor="middle" font-weight="400" stroke="#c3c4c8" stroke-width="0.18">A-series</text>
<rect x="765.1" y="266" width="60.3" height="121.6" fill="#25262b"/>
<rect x="765.1" y="353.4" width="60.3" height="34.2" fill="#2c4a72"/>
<rect x="765.1" y="353.4" width="60.3" height="1.4" fill="#5794f2"/>
<text x="795.25" y="261.7" font-size="17" fill="#5794f2" text-anchor="middle" font-weight="400"  textLength="28.5" lengthAdjust="spacingAndGlyphs">27.7</text>
<text x="795.25" y="398.3" font-size="9.4" fill="#c3c4c8" text-anchor="middle" font-weight="400" stroke="#c3c4c8" stroke-width="0.18">B-series</text>
<rect x="831.5" y="266" width="60.3" height="121.6" fill="#25262b"/>
<rect x="831.5" y="342" width="60.3" height="45.6" fill="#2c4a72"/>
<rect x="831.5" y="342" width="60.3" height="1.4" fill="#5794f2"/>
<text x="861.65" y="261.7" font-size="17" fill="#5794f2" text-anchor="middle" font-weight="400"  textLength="24.8" lengthAdjust="spacingAndGlyphs">37.1</text>
<text x="861.65" y="398.3" font-size="9.4" fill="#c3c4c8" text-anchor="middle" font-weight="400" stroke="#c3c4c8" stroke-width="0.18">C-series</text>
<rect x="898" y="266" width="60.3" height="121.6" fill="#25262b"/>
<rect x="898" y="306" width="60.3" height="81.6" fill="#553a68"/>
<rect x="898" y="306" width="60.3" height="1.4" fill="#b877d9"/>
<text x="928.15" y="261.7" font-size="17" fill="#b877d9" text-anchor="middle" font-weight="400"  textLength="30.7" lengthAdjust="spacingAndGlyphs">66.5</text>
<text x="928.15" y="398.3" font-size="9.4" fill="#c3c4c8" text-anchor="middle" font-weight="400" stroke="#c3c4c8" stroke-width="0.18">D-series</text>
<rect x="964.5" y="266" width="60.3" height="121.6" fill="#25262b"/>
<rect x="964.5" y="361.7" width="60.3" height="25.9" fill="#2c4a72"/>
<rect x="964.5" y="361.7" width="60.3" height="1.4" fill="#5794f2"/>
<text x="994.65" y="261.7" font-size="17" fill="#5794f2" text-anchor="middle" font-weight="400"  textLength="27.7" lengthAdjust="spacingAndGlyphs">21.2</text>
<text x="994.65" y="398.3" font-size="9.4" fill="#c3c4c8" text-anchor="middle" font-weight="400" stroke="#c3c4c8" stroke-width="0.18">E-series</text>
<text x="520" y="425.8" font-size="9.3" fill="#d8d9dd" text-anchor="middle" font-weight="400" stroke="#d8d9dd" stroke-width="0.25" textLength="99.5" lengthAdjust="spacingAndGlyphs">client side full page load</text>
<line x1="39.1" y1="443.7" x2="917.8" y2="443.7" stroke="#2d3530" stroke-width="1"/>
<text x="32.8" y="446.4" font-size="7.6" fill="#d0d1d5" text-anchor="end" font-weight="400" stroke="#d0d1d5" stroke-width="0.18">5 s</text>
<line x1="39.1" y1="465.16" x2="917.8" y2="465.16" stroke="#2d3530" stroke-width="1"/>
<text x="32.8" y="467.86" font-size="7.6" fill="#d0d1d5" text-anchor="end" font-weight="400" stroke="#d0d1d5" stroke-width="0.18">4 s</text>
<line x1="39.1" y1="486.62" x2="917.8" y2="486.62" stroke="#2d3530" stroke-width="1"/>
<text x="32.8" y="489.32" font-size="7.6" fill="#d0d1d5" text-anchor="end" font-weight="400" stroke="#d0d1d5" stroke-width="0.18">3 s</text>
<line x1="39.1" y1="508.08" x2="917.8" y2="508.08" stroke="#2d3530" stroke-width="1"/>
<text x="32.8" y="510.78" font-size="7.6" fill="#d0d1d5" text-anchor="end" font-weight="400" stroke="#d0d1d5" stroke-width="0.18">2 s</text>
<line x1="39.1" y1="529.54" x2="917.8" y2="529.54" stroke="#2d3530" stroke-width="1"/>
<text x="32.8" y="532.24" font-size="7.6" fill="#d0d1d5" text-anchor="end" font-weight="400" stroke="#d0d1d5" stroke-width="0.18">1 s</text>
<line x1="39.1" y1="551" x2="917.8" y2="551" stroke="#2d3530" stroke-width="1"/>
<text x="32.8" y="553.7" font-size="7.6" fill="#d0d1d5" text-anchor="end" font-weight="400" stroke="#d0d1d5" stroke-width="0.18">0 ms</text>
<line x1="39.1" y1="443.7" x2="39.1" y2="551" stroke="#2d3530" stroke-width="1"/>
<text x="39.1" y="563" font-size="7.6" fill="#d0d1d5" text-anchor="middle" font-weight="400" stroke="#d0d1d5" stroke-width="0.18">16:50</text>
<line x1="112.65" y1="443.7" x2="112.65" y2="551" stroke="#2d3530" stroke-width="1"/>
<text x="112.65" y="563" font-size="7.6" fill="#d0d1d5" text-anchor="middle" font-weight="400" stroke="#d0d1d5" stroke-width="0.18">16:55</text>
<line x1="186.2" y1="443.7" x2="186.2" y2="551" stroke="#2d3530" stroke-width="1"/>
<text x="186.2" y="563" font-size="7.6" fill="#d0d1d5" text-anchor="middle" font-weight="400" stroke="#d0d1d5" stroke-width="0.18">17:00</text>
<line x1="259.75" y1="443.7" x2="259.75" y2="551" stroke="#2d3530" stroke-width="1"/>
<text x="259.75" y="563" font-size="7.6" fill="#d0d1d5" text-anchor="middle" font-weight="400" stroke="#d0d1d5" stroke-width="0.18">17:05</text>
<line x1="333.3" y1="443.7" x2="333.3" y2="551" stroke="#2d3530" stroke-width="1"/>
<text x="333.3" y="563" font-size="7.6" fill="#d0d1d5" text-anchor="middle" font-weight="400" stroke="#d0d1d5" stroke-width="0.18">17:10</text>
<line x1="406.85" y1="443.7" x2="406.85" y2="551" stroke="#2d3530" stroke-width="1"/>
<text x="406.85" y="563" font-size="7.6" fill="#d0d1d5" text-anchor="middle" font-weight="400" stroke="#d0d1d5" stroke-width="0.18">17:15</text>
<line x1="480.4" y1="443.7" x2="480.4" y2="551" stroke="#2d3530" stroke-width="1"/>
<text x="480.4" y="563" font-size="7.6" fill="#d0d1d5" text-anchor="middle" font-weight="400" stroke="#d0d1d5" stroke-width="0.18">17:20</text>
<line x1="553.95" y1="443.7" x2="553.95" y2="551" stroke="#2d3530" stroke-width="1"/>
<text x="553.95" y="563" font-size="7.6" fill="#d0d1d5" text-anchor="middle" font-weight="400" stroke="#d0d1d5" stroke-width="0.18">17:25</text>
<line x1="627.5" y1="443.7" x2="627.5" y2="551" stroke="#2d3530" stroke-width="1"/>
<text x="627.5" y="563" font-size="7.6" fill="#d0d1d5" text-anchor="middle" font-weight="400" stroke="#d0d1d5" stroke-width="0.18">17:30</text>
<line x1="701.05" y1="443.7" x2="701.05" y2="551" stroke="#2d3530" stroke-width="1"/>
<text x="701.05" y="563" font-size="7.6" fill="#d0d1d5" text-anchor="middle" font-weight="400" stroke="#d0d1d5" stroke-width="0.18">17:35</text>
<line x1="774.6" y1="443.7" x2="774.6" y2="551" stroke="#2d3530" stroke-width="1"/>
<text x="774.6" y="563" font-size="7.6" fill="#d0d1d5" text-anchor="middle" font-weight="400" stroke="#d0d1d5" stroke-width="0.18">17:40</text>
<line x1="848.15" y1="443.7" x2="848.15" y2="551" stroke="#2d3530" stroke-width="1"/>
<text x="848.15" y="563" font-size="7.6" fill="#d0d1d5" text-anchor="middle" font-weight="400" stroke="#d0d1d5" stroke-width="0.18">17:45</text>
<rect x="36.4" y="478.9" width="13.5" height="72.1" fill="#e24d42"/>
<rect x="36.4" y="515" width="13.5" height="36" fill="#ef843c"/>
<rect x="36.4" y="537.6" width="13.5" height="13.4" fill="#eab839"/>
<rect x="36.4" y="548.6" width="13.5" height="2.4" fill="#f4d58d"/>
<rect x="69.6" y="505.8" width="39" height="45.2" fill="#e24d42"/>
<rect x="69.6" y="525.2" width="39" height="25.8" fill="#ef843c"/>
<rect x="69.6" y="541.8" width="39" height="9.2" fill="#eab839"/>
<rect x="69.6" y="549" width="39" height="2" fill="#f4d58d"/>
<rect x="128.3" y="483.6" width="39" height="67.4" fill="#e24d42"/>
<rect x="128.3" y="515.5" width="39" height="35.5" fill="#ef843c"/>
<rect x="128.3" y="537.1" width="39" height="13.9" fill="#eab839"/>
<rect x="128.3" y="548.5" width="39" height="2.5" fill="#f4d58d"/>
<rect x="186.5" y="484.4" width="39" height="66.6" fill="#e24d42"/>
<rect x="186.5" y="516" width="39" height="35" fill="#ef843c"/>
<rect x="186.5" y="538" width="39" height="13" fill="#eab839"/>
<rect x="186.5" y="548.6" width="39" height="2.4" fill="#f4d58d"/>
<rect x="245.6" y="490.5" width="39" height="60.5" fill="#e24d42"/>
<rect x="245.6" y="519" width="39" height="32" fill="#ef843c"/>
<rect x="245.6" y="539" width="39" height="12" fill="#eab839"/>
<rect x="245.6" y="549" width="39" height="2" fill="#f4d58d"/>
<rect x="304" y="492" width="39" height="59" fill="#e24d42"/>
<rect x="304" y="516.9" width="39" height="34.1" fill="#ef843c"/>
<rect x="304" y="538" width="39" height="13" fill="#eab839"/>
<rect x="304" y="548.8" width="39" height="2.2" fill="#f4d58d"/>
<rect x="363" y="492" width="39" height="59" fill="#e24d42"/>
<rect x="363" y="521" width="39" height="30" fill="#ef843c"/>
<rect x="363" y="539" width="39" height="12" fill="#eab839"/>
<rect x="363" y="549" width="39" height="2" fill="#f4d58d"/>
<rect x="421.8" y="483.9" width="39" height="67.1" fill="#e24d42"/>
<rect x="421.8" y="513" width="39" height="38" fill="#ef843c"/>
<rect x="421.8" y="536.6" width="39" height="14.4" fill="#eab839"/>
<rect x="421.8" y="548.3" width="39" height="2.7" fill="#f4d58d"/>
<rect x="480.6" y="465.9" width="39" height="85.1" fill="#e24d42"/>
<rect x="480.6" y="505.8" width="39" height="45.2" fill="#ef843c"/>
<rect x="480.6" y="534.3" width="39" height="16.7" fill="#eab839"/>
<rect x="480.6" y="546.8" width="39" height="4.2" fill="#f4d58d"/>
<rect x="539.3" y="489.2" width="39" height="61.8" fill="#e24d42"/>
<rect x="539.3" y="515.8" width="39" height="35.2" fill="#ef843c"/>
<rect x="539.3" y="535.7" width="39" height="15.3" fill="#eab839"/>
<rect x="539.3" y="547.6" width="39" height="3.4" fill="#f4d58d"/>
<rect x="598" y="465.9" width="39" height="85.1" fill="#e24d42"/>
<rect x="598" y="503.8" width="39" height="47.2" fill="#ef843c"/>
<rect x="598" y="531.6" width="39" height="19.4" fill="#eab839"/>
<rect x="598" y="546" width="39" height="5" fill="#f4d58d"/>
<rect x="656.5" y="483" width="39" height="68" fill="#e24d42"/>
<rect x="656.5" y="515" width="39" height="36" fill="#ef843c"/>
<rect x="656.5" y="538.5" width="39" height="12.5" fill="#eab839"/>
<rect x="656.5" y="548.7" width="39" height="2.3" fill="#f4d58d"/>
<rect x="715.2" y="468.6" width="39" height="82.4" fill="#e24d42"/>
<rect x="715.2" y="508.8" width="39" height="42.2" fill="#ef843c"/>
<rect x="715.2" y="534.9" width="39" height="16.1" fill="#eab839"/>
<rect x="715.2" y="546.8" width="39" height="4.2" fill="#f4d58d"/>
<rect x="774" y="479.7" width="39" height="71.3" fill="#e24d42"/>
<rect x="774" y="509.4" width="39" height="41.6" fill="#ef843c"/>
<rect x="774" y="532.4" width="39" height="18.6" fill="#eab839"/>
<rect x="774" y="546.3" width="39" height="4.7" fill="#f4d58d"/>
<rect x="833" y="467" width="39" height="84" fill="#e24d42"/>
<rect x="833" y="504.4" width="39" height="46.6" fill="#ef843c"/>
<rect x="833" y="529.6" width="39" height="21.4" fill="#eab839"/>
<rect x="833" y="546" width="39" height="5" fill="#f4d58d"/>
<rect x="891.2" y="490.5" width="26.6" height="60.5" fill="#e24d42"/>
<rect x="891.2" y="519.6" width="26.6" height="31.4" fill="#ef843c"/>
<rect x="891.2" y="540.7" width="26.6" height="10.3" fill="#eab839"/>
<rect x="891.2" y="548.8" width="26.6" height="2.2" fill="#f4d58d"/>
<text x="1015" y="450.2" font-size="8" fill="#3e8fe0" text-anchor="end" font-weight="400" stroke="#3e8fe0" stroke-width="0.18">avg</text>
<rect x="932.4" y="460.4" width="8.7" height="2.6" rx="1.2" fill="#c8c8cc"/>
<text x="947.7" y="464.6" font-size="7.8" fill="#d0d1d5" text-anchor="start" font-weight="400" stroke="#d0d1d5" stroke-width="0.18">upper_25</text>
<text x="1020" y="464.6" font-size="7.8" fill="#d0d1d5" text-anchor="end" font-weight="400" stroke="#d0d1d5" stroke-width="0.18">6.81 ms</text>
<rect x="931.2" y="469.78" width="90.3" height="17" fill="#24252a"/>
<rect x="932.4" y="476.98" width="8.7" height="2.6" rx="1.2" fill="#f4d58d"/>
<text x="947.7" y="481.18" font-size="7.8" fill="#d0d1d5" text-anchor="start" font-weight="400" stroke="#d0d1d5" stroke-width="0.18">upper_50</text>
<text x="1020" y="481.18" font-size="7.8" fill="#d0d1d5" text-anchor="end" font-weight="400" stroke="#d0d1d5" stroke-width="0.18">142 ms</text>
<rect x="932.4" y="493.56" width="8.7" height="2.6" rx="1.2" fill="#eab839"/>
<text x="947.7" y="497.76" font-size="7.8" fill="#d0d1d5" text-anchor="start" font-weight="400" stroke="#d0d1d5" stroke-width="0.18">upper_75</text>
<text x="1020" y="497.76" font-size="7.8" fill="#d0d1d5" text-anchor="end" font-weight="400" stroke="#d0d1d5" stroke-width="0.18">535 ms</text>
<rect x="931.2" y="502.94" width="90.3" height="17" fill="#24252a"/>
<rect x="932.4" y="510.14" width="8.7" height="2.6" rx="1.2" fill="#ef843c"/>
<text x="947.7" y="514.34" font-size="7.8" fill="#d0d1d5" text-anchor="start" font-weight="400" stroke="#d0d1d5" stroke-width="0.18">upper_90</text>
<text x="1020" y="514.34" font-size="7.8" fill="#d0d1d5" text-anchor="end" font-weight="400" stroke="#d0d1d5" stroke-width="0.18">1.04 s</text>
<rect x="932.4" y="526.72" width="8.7" height="2.6" rx="1.2" fill="#e24d42"/>
<text x="947.7" y="530.92" font-size="7.8" fill="#d0d1d5" text-anchor="start" font-weight="400" stroke="#d0d1d5" stroke-width="0.18">upper_95</text>
<text x="1020" y="530.92" font-size="7.8" fill="#d0d1d5" text-anchor="end" font-weight="400" stroke="#d0d1d5" stroke-width="0.18">1.46 s</text>
<defs><linearGradient id="lg" gradientUnits="userSpaceOnUse" x1="14" y1="4.5" x2="18.5" y2="19"><stop offset="0" stop-color="#ef4f2a"/><stop offset="0.55" stop-color="#f7901e"/><stop offset="1" stop-color="#fcc10f"/></linearGradient></defs>
<g fill="url(#lg)"><circle cx="17.4" cy="12" r="5.9"/>
<circle cx="18.39" cy="6.39" r="1.55"/>
<circle cx="22.07" cy="8.73" r="1.55"/>
<circle cx="23.01" cy="12.99" r="1.55"/>
<circle cx="20.67" cy="16.67" r="1.55"/>
<circle cx="16.41" cy="17.61" r="1.55"/>
<circle cx="12.73" cy="15.27" r="1.55"/>
<circle cx="11.79" cy="11.01" r="1.55"/>
<circle cx="14.13" cy="7.33" r="1.55"/>
</g>
<circle cx="18.1" cy="12.7" r="4.1" fill="#1e1e21"/>
<path d="M18.2,15.2 A2.5,2.5 0 1 1 20.6,12.3" fill="none" stroke="#f2761f" stroke-width="1.1"/><circle cx="18.2" cy="12.7" r="0.85" fill="#f2761f"/>
<rect x="395.5" y="2.5" width="253.5" height="18.7" rx="2" fill="#121215" stroke="#2a2a2e" stroke-width="1"/>
<circle cx="404.7" cy="11.6" r="3.2" fill="none" stroke="#9b9ca4" stroke-width="1.1"/><line x1="407" y1="14" x2="409.3" y2="16.3" stroke="#9b9ca4" stroke-width="1.1"/>
<text x="413.8" y="15.4" font-size="9.2" fill="#9b9ca4" text-anchor="start" font-weight="400" stroke="#9b9ca4" stroke-width="0.18" textLength="80.6" lengthAdjust="spacingAndGlyphs">Search or jump to...</text>
<rect x="607.6" y="9.2" width="9" height="5.6" rx="1" fill="none" stroke="#9b9ca4" stroke-width="0.9"/><line x1="609.6" y1="12.8" x2="614.6" y2="12.8" stroke="#9b9ca4" stroke-width="0.7"/>
<text x="620" y="15" font-size="8.1" fill="#9b9ca4" text-anchor="start" font-weight="400" stroke="#9b9ca4" stroke-width="0.18">cmd+k</text>
<circle cx="978" cy="11.9" r="4.6" fill="none" stroke="#b8b9bf" stroke-width="1"/>
<text x="978" y="14.4" font-size="6.5" fill="#b8b9bf" text-anchor="middle" font-weight="700" stroke="#b8b9bf" stroke-width="0.18">?</text>
<g fill="none" stroke="#b8b9bf" stroke-width="0.95"><path d="M998.8,13.4 A3,3 0 0 1 1001.8,16.4"/><path d="M998.8,11 A5.4,5.4 0 0 1 1004.2,16.4"/><path d="M998.8,8.6 A7.8,7.8 0 0 1 1006.6,16.4"/></g><circle cx="999.4" cy="15.8" r="0.95" fill="#b8b9bf"/>
<circle cx="1025.6" cy="11.9" r="7.7" fill="#173f78"/>
<g fill="#a9d677"><rect x="1021" y="5" width="2.9" height="2.4"/><rect x="1027.2" y="5" width="2.9" height="2.4"/><rect x="1022.6" y="6.2" width="6" height="6.4"/><rect x="1019.8" y="12" width="4.4" height="4.6"/><rect x="1027" y="12" width="4.9" height="4.6"/></g>
<path d="M1023.2,14.4 L1025.6,12.3 L1028,14.4 L1026.5,14.4 L1026.5,17 L1024.7,17 L1024.7,14.4 Z" fill="#173f78"/>
<rect x="11.2" y="33.3" width="12.2" height="1.4" rx="0.6" fill="#c8c9ce"/>
<rect x="11.2" y="36.4" width="12.2" height="1.4" rx="0.6" fill="#c8c9ce"/>
<rect x="11.2" y="39.5" width="12.2" height="1.4" rx="0.6" fill="#c8c9ce"/>
<text x="34.6" y="40.4" font-size="9.2" fill="#d2d3d8" text-anchor="start" font-weight="400" stroke="#d2d3d8" stroke-width="0.18" textLength="24.4" lengthAdjust="spacingAndGlyphs">Home</text>
<path d="M64.3,35.3 L66.3,37.3 L64.3,39.3" fill="none" stroke="#8d8e95" stroke-width="0.9"/>
<text x="74" y="40.4" font-size="9.2" fill="#d2d3d8" text-anchor="start" font-weight="400" stroke="#d2d3d8" stroke-width="0.18" textLength="50" lengthAdjust="spacingAndGlyphs">Dashboards</text>
<path d="M129.5,35.3 L131.5,37.3 L129.5,39.3" fill="none" stroke="#8d8e95" stroke-width="0.9"/>
<text x="138.5" y="40.4" font-size="9.5" fill="#9a9ba2" text-anchor="start" font-weight="400" stroke="#9a9ba2" stroke-width="0.18" textLength="90.1" lengthAdjust="spacingAndGlyphs">Website performance</text>
<line x1="1011.5" y1="30" x2="1011.5" y2="44.7" stroke="#2f3330" stroke-width="1"/>
<path d="M1021.6,39.6 L1024.4,36.2 L1027.2,39.6" fill="none" stroke="#c8c9ce" stroke-width="1.1"/>
</svg>
</body></html>
